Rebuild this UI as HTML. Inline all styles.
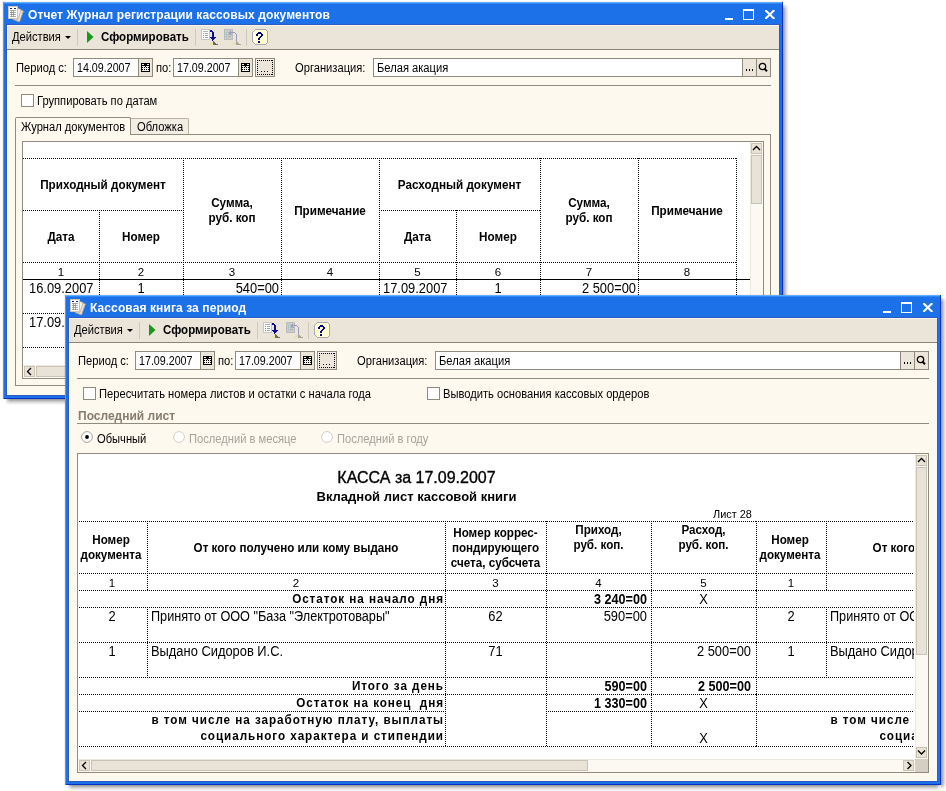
<!DOCTYPE html>
<html><head><meta charset="utf-8"><style>
html,body{margin:0;padding:0;background:#fff;width:946px;height:791px;overflow:hidden;position:relative;font-family:"Liberation Sans", sans-serif;}
div{font-family:"Liberation Sans", sans-serif;}
</style></head><body><div style="position:absolute;left:0;top:0;width:946px;height:791px;overflow:hidden;will-change:transform;">
<div style="position:absolute;left:783px;top:5px;width:6px;height:398px;background:linear-gradient(90deg,rgba(0,0,0,.42),rgba(0,0,0,.12) 60%,rgba(0,0,0,0));-webkit-mask:linear-gradient(180deg,rgba(0,0,0,.3),#000 4px,#000 calc(100% - 5px),rgba(0,0,0,0));"></div><div style="position:absolute;left:6px;top:399px;width:778px;height:6px;background:linear-gradient(180deg,rgba(0,0,0,.42),rgba(0,0,0,.12) 60%,rgba(0,0,0,0));-webkit-mask:linear-gradient(90deg,rgba(0,0,0,.3),#000 4px,#000 calc(100% - 6px),rgba(0,0,0,0));"></div><div style="position:absolute;left:2px;top:1px;width:1px;height:398px;background:rgba(120,90,60,.10);"></div><div style="position:absolute;left:3px;top:1px;width:780px;height:1px;background:rgba(120,90,60,.07);"></div><div style="position:absolute;left:3px;top:2px;width:780px;height:397px;background:#1C70E8;box-shadow:inset 1px 0 0 #4A9CFF, inset -1px -1px 0 #0034C8, inset 0 1px 0 #62AEFF;"></div><div style="position:absolute;left:4px;top:3px;width:778px;height:1px;background:#3088F8;"></div><div style="position:absolute;left:6px;top:24px;width:774px;height:372px;background:#2F5CC0;"></div><div style="position:absolute;left:7px;top:25px;width:772px;height:370px;background:#FEF9EE;"></div><svg style="position:absolute;left:8px;top:6px" width="17" height="17" viewBox="0 0 17 17">
<path d="M9 2.5 L15.5 5 L11.5 16 L5 13.5 Z" fill="#E6E2D8" stroke="#B09C80" stroke-width="0.8"/>
<path d="M8 2 L13 3.5 L10 13.5 L5 12.5 Z" fill="#F6F4EE" stroke="#B09C80" stroke-width="0.6"/>
<rect x="0.5" y="0.5" width="9" height="12" fill="#FFFFFF" stroke="#D0C4AC"/>
<rect x="2" y="2" width="2" height="1" fill="#20208A"/><rect x="6" y="2" width="2" height="1" fill="#20208A"/>
<path d="M2 4.5H8M2 6.5H8M2 8.5H8M2 10.5H8M3.5 4V11M5.5 4V11" stroke="#8A8A8A" stroke-width="0.7" fill="none"/>
</svg><div style="position:absolute;left:28px;top:7px;height:16px;line-height:16px;font-size:12px;font-weight:700;color:#fff;text-align:left;white-space:pre;letter-spacing:0.1px;">Отчет Журнал регистрации кассовых документов</div><div style="position:absolute;left:725px;top:18px;width:8px;height:2px;background:#fff;"></div><div style="position:absolute;left:743px;top:9px;width:11px;height:11px;box-sizing:border-box;border:1px solid #fff;border-top:2px solid #fff;"></div><svg style="position:absolute;left:765px;top:10px" width="10" height="9" viewBox="0 0 10 9">
<path d="M1 0.8L8.6 8.2M8.6 0.8L1 8.2" stroke="#fff" stroke-width="2.1" stroke-linecap="square"/></svg><div style="position:absolute;left:7px;top:25px;width:772px;height:24px;background:#EBE4D9;box-shadow:inset 1px 1px 0 #F8F4EC;"></div><div style="position:absolute;left:7px;top:49px;width:772px;height:1px;background:#8C8575;"></div><div style="position:absolute;left:12px;top:30px;height:15px;line-height:15px;font-size:12px;font-weight:400;color:#000;text-align:left;white-space:pre;transform:scaleX(0.93);transform-origin:0 0;">Действия</div><svg style="position:absolute;left:65px;top:36px" width="6" height="4"><path d="M0 0H6L3 3Z" fill="#000"/></svg><div style="position:absolute;left:77px;top:29px;width:1px;height:17px;background:#CFC9BC;"></div><svg style="position:absolute;left:87px;top:31px" width="7" height="13"><path d="M0 0L6.5 6L0 12Z" fill="#189818"/></svg><div style="position:absolute;left:101px;top:30px;height:15px;line-height:15px;font-size:12px;font-weight:700;color:#000;text-align:left;white-space:pre;transform:scaleX(0.96);transform-origin:0 0;">Сформировать</div><div style="position:absolute;left:195px;top:29px;width:1px;height:17px;background:#CFC9BC;"></div><svg style="position:absolute;left:201px;top:29px" width="17" height="16" shape-rendering="crispEdges"><rect x="1" y="1" width="7" height="9" fill="#FFFFFF"/><rect x="0" y="0" width="1" height="1" fill="#C6C6C6"/><rect x="1" y="0" width="1" height="1" fill="#C6C6C6"/><rect x="2" y="0" width="1" height="1" fill="#C6C6C6"/><rect x="3" y="0" width="1" height="1" fill="#C6C6C6"/><rect x="4" y="0" width="1" height="1" fill="#C6C6C6"/><rect x="5" y="0" width="1" height="1" fill="#C6C6C6"/><rect x="6" y="0" width="1" height="1" fill="#C6C6C6"/><rect x="7" y="0" width="1" height="1" fill="#C6C6C6"/><rect x="8" y="0" width="1" height="1" fill="#C6C6C6"/><rect x="0" y="1" width="1" height="1" fill="#C6C6C6"/><rect x="8" y="1" width="1" height="1" fill="#C6C6C6"/><rect x="9" y="1" width="1" height="1" fill="#0A0A96"/><rect x="10" y="1" width="1" height="1" fill="#0A0A96"/><rect x="0" y="2" width="1" height="1" fill="#C6C6C6"/><rect x="2" y="2" width="1" height="1" fill="#B4B4B4"/><rect x="3" y="2" width="1" height="1" fill="#B4B4B4"/><rect x="4" y="2" width="1" height="1" fill="#B4B4B4"/><rect x="5" y="2" width="1" height="1" fill="#B4B4B4"/><rect x="6" y="2" width="1" height="1" fill="#B4B4B4"/><rect x="8" y="2" width="1" height="1" fill="#C6C6C6"/><rect x="9" y="2" width="1" height="1" fill="#0A0A96"/><rect x="10" y="2" width="1" height="1" fill="#0A0A96"/><rect x="11" y="2" width="1" height="1" fill="#0A0A96"/><rect x="0" y="3" width="1" height="1" fill="#C6C6C6"/><rect x="8" y="3" width="1" height="1" fill="#C6C6C6"/><rect x="11" y="3" width="1" height="1" fill="#0A0A96"/><rect x="12" y="3" width="1" height="1" fill="#0A0A96"/><rect x="0" y="4" width="1" height="1" fill="#C6C6C6"/><rect x="2" y="4" width="1" height="1" fill="#30B8C8"/><rect x="4" y="4" width="1" height="1" fill="#A8A8A8"/><rect x="5" y="4" width="1" height="1" fill="#A8A8A8"/><rect x="6" y="4" width="1" height="1" fill="#A8A8A8"/><rect x="8" y="4" width="1" height="1" fill="#C6C6C6"/><rect x="11" y="4" width="1" height="1" fill="#0A0A96"/><rect x="12" y="4" width="1" height="1" fill="#0A0A96"/><rect x="0" y="5" width="1" height="1" fill="#C6C6C6"/><rect x="8" y="5" width="1" height="1" fill="#C6C6C6"/><rect x="11" y="5" width="1" height="1" fill="#0A0A96"/><rect x="12" y="5" width="1" height="1" fill="#0A0A96"/><rect x="0" y="6" width="1" height="1" fill="#C6C6C6"/><rect x="2" y="6" width="1" height="1" fill="#30B8C8"/><rect x="4" y="6" width="1" height="1" fill="#A8A8A8"/><rect x="5" y="6" width="1" height="1" fill="#A8A8A8"/><rect x="6" y="6" width="1" height="1" fill="#A8A8A8"/><rect x="8" y="6" width="1" height="1" fill="#C6C6C6"/><rect x="11" y="6" width="1" height="1" fill="#0A0A96"/><rect x="12" y="6" width="1" height="1" fill="#0A0A96"/><rect x="0" y="7" width="1" height="1" fill="#C6C6C6"/><rect x="8" y="7" width="1" height="1" fill="#C6C6C6"/><rect x="11" y="7" width="1" height="1" fill="#0A0A96"/><rect x="12" y="7" width="1" height="1" fill="#0A0A96"/><rect x="0" y="8" width="1" height="1" fill="#C6C6C6"/><rect x="2" y="8" width="1" height="1" fill="#30B8C8"/><rect x="4" y="8" width="1" height="1" fill="#A8A8A8"/><rect x="5" y="8" width="1" height="1" fill="#A8A8A8"/><rect x="6" y="8" width="1" height="1" fill="#A8A8A8"/><rect x="8" y="8" width="1" height="1" fill="#C6C6C6"/><rect x="9" y="8" width="1" height="1" fill="#0A0A96"/><rect x="10" y="8" width="1" height="1" fill="#0A0A96"/><rect x="11" y="8" width="1" height="1" fill="#0A0A96"/><rect x="12" y="8" width="1" height="1" fill="#0A0A96"/><rect x="13" y="8" width="1" height="1" fill="#0A0A96"/><rect x="14" y="8" width="1" height="1" fill="#0A0A96"/><rect x="0" y="9" width="1" height="1" fill="#C6C6C6"/><rect x="8" y="9" width="1" height="1" fill="#C6C6C6"/><rect x="10" y="9" width="1" height="1" fill="#0A0A96"/><rect x="11" y="9" width="1" height="1" fill="#0A0A96"/><rect x="12" y="9" width="1" height="1" fill="#0A0A96"/><rect x="13" y="9" width="1" height="1" fill="#0A0A96"/><rect x="0" y="10" width="1" height="1" fill="#C6C6C6"/><rect x="1" y="10" width="1" height="1" fill="#C6C6C6"/><rect x="2" y="10" width="1" height="1" fill="#C6C6C6"/><rect x="3" y="10" width="1" height="1" fill="#C6C6C6"/><rect x="4" y="10" width="1" height="1" fill="#C6C6C6"/><rect x="5" y="10" width="1" height="1" fill="#C6C6C6"/><rect x="6" y="10" width="1" height="1" fill="#C6C6C6"/><rect x="7" y="10" width="1" height="1" fill="#C6C6C6"/><rect x="8" y="10" width="1" height="1" fill="#C6C6C6"/><rect x="11" y="10" width="1" height="1" fill="#0A0A96"/><rect x="12" y="10" width="1" height="1" fill="#0A0A96"/><rect x="11" y="11" width="1" height="1" fill="#0A0A96"/><rect x="12" y="12" width="1" height="1" fill="#6E6C58"/><rect x="10" y="13" width="1" height="1" fill="#EEE6A8"/><rect x="11" y="13" width="1" height="1" fill="#EEE6A8"/><rect x="12" y="13" width="1" height="1" fill="#6E6C58"/><rect x="13" y="13" width="1" height="1" fill="#6E6C58"/><rect x="9" y="14" width="1" height="1" fill="#EEE6A8"/><rect x="10" y="14" width="1" height="1" fill="#EEE6A8"/><rect x="11" y="14" width="1" height="1" fill="#EEE6A8"/><rect x="12" y="14" width="1" height="1" fill="#6E6C58"/><rect x="13" y="14" width="1" height="1" fill="#6E6C58"/><rect x="14" y="14" width="1" height="1" fill="#6E6C58"/><rect x="8" y="15" width="1" height="1" fill="#EEE6A8"/><rect x="9" y="15" width="1" height="1" fill="#EEE6A8"/><rect x="10" y="15" width="1" height="1" fill="#EEE6A8"/><rect x="11" y="15" width="1" height="1" fill="#EEE6A8"/><rect x="12" y="15" width="1" height="1" fill="#6E6C58"/><rect x="13" y="15" width="1" height="1" fill="#6E6C58"/><rect x="14" y="15" width="1" height="1" fill="#6E6C58"/><rect x="15" y="15" width="1" height="1" fill="#6E6C58"/><rect x="16" y="15" width="1" height="1" fill="#6E6C58"/></svg><svg style="position:absolute;left:224px;top:29px" width="17" height="16" shape-rendering="crispEdges"><rect x="0" y="0" width="1" height="1" fill="#BCBCBC"/><rect x="1" y="0" width="1" height="1" fill="#BCBCBC"/><rect x="2" y="0" width="1" height="1" fill="#BCBCBC"/><rect x="3" y="0" width="1" height="1" fill="#BCBCBC"/><rect x="4" y="0" width="1" height="1" fill="#BCBCBC"/><rect x="5" y="0" width="1" height="1" fill="#BCBCBC"/><rect x="6" y="0" width="1" height="1" fill="#BCBCBC"/><rect x="7" y="0" width="1" height="1" fill="#BCBCBC"/><rect x="8" y="0" width="1" height="1" fill="#BCBCBC"/><rect x="0" y="1" width="1" height="1" fill="#BCBCBC"/><rect x="1" y="1" width="1" height="1" fill="#CACACA"/><rect x="2" y="1" width="1" height="1" fill="#CACACA"/><rect x="3" y="1" width="1" height="1" fill="#CACACA"/><rect x="4" y="1" width="1" height="1" fill="#CACACA"/><rect x="5" y="1" width="1" height="1" fill="#CACACA"/><rect x="6" y="1" width="1" height="1" fill="#CACACA"/><rect x="7" y="1" width="1" height="1" fill="#CACACA"/><rect x="8" y="1" width="1" height="1" fill="#BCBCBC"/><rect x="0" y="2" width="1" height="1" fill="#BCBCBC"/><rect x="1" y="2" width="1" height="1" fill="#CACACA"/><rect x="2" y="2" width="1" height="1" fill="#CACACA"/><rect x="3" y="2" width="1" height="1" fill="#CACACA"/><rect x="4" y="2" width="1" height="1" fill="#CACACA"/><rect x="5" y="2" width="1" height="1" fill="#CACACA"/><rect x="6" y="2" width="1" height="1" fill="#9A9AC0"/><rect x="7" y="2" width="1" height="1" fill="#CACACA"/><rect x="8" y="2" width="1" height="1" fill="#BCBCBC"/><rect x="0" y="3" width="1" height="1" fill="#BCBCBC"/><rect x="1" y="3" width="1" height="1" fill="#CACACA"/><rect x="2" y="3" width="1" height="1" fill="#88C8D0"/><rect x="3" y="3" width="1" height="1" fill="#CACACA"/><rect x="4" y="3" width="1" height="1" fill="#B4B4B8"/><rect x="5" y="3" width="1" height="1" fill="#9A9AC0"/><rect x="6" y="3" width="1" height="1" fill="#9A9AC0"/><rect x="7" y="3" width="1" height="1" fill="#9A9AC0"/><rect x="8" y="3" width="1" height="1" fill="#9A9AC0"/><rect x="9" y="3" width="1" height="1" fill="#9A9AC0"/><rect x="10" y="3" width="1" height="1" fill="#9A9AC0"/><rect x="0" y="4" width="1" height="1" fill="#BCBCBC"/><rect x="1" y="4" width="1" height="1" fill="#CACACA"/><rect x="2" y="4" width="1" height="1" fill="#CACACA"/><rect x="3" y="4" width="1" height="1" fill="#CACACA"/><rect x="4" y="4" width="1" height="1" fill="#CACACA"/><rect x="5" y="4" width="1" height="1" fill="#9A9AC0"/><rect x="6" y="4" width="1" height="1" fill="#9A9AC0"/><rect x="7" y="4" width="1" height="1" fill="#CACACA"/><rect x="8" y="4" width="1" height="1" fill="#BCBCBC"/><rect x="11" y="4" width="1" height="1" fill="#9A9AC0"/><rect x="0" y="5" width="1" height="1" fill="#BCBCBC"/><rect x="1" y="5" width="1" height="1" fill="#CACACA"/><rect x="2" y="5" width="1" height="1" fill="#88C8D0"/><rect x="3" y="5" width="1" height="1" fill="#CACACA"/><rect x="4" y="5" width="1" height="1" fill="#B4B4B8"/><rect x="5" y="5" width="1" height="1" fill="#B4B4B8"/><rect x="6" y="5" width="1" height="1" fill="#B4B4B8"/><rect x="7" y="5" width="1" height="1" fill="#9A9AC0"/><rect x="8" y="5" width="1" height="1" fill="#BCBCBC"/><rect x="12" y="5" width="1" height="1" fill="#9A9AC0"/><rect x="0" y="6" width="1" height="1" fill="#BCBCBC"/><rect x="1" y="6" width="1" height="1" fill="#CACACA"/><rect x="2" y="6" width="1" height="1" fill="#CACACA"/><rect x="3" y="6" width="1" height="1" fill="#CACACA"/><rect x="4" y="6" width="1" height="1" fill="#CACACA"/><rect x="5" y="6" width="1" height="1" fill="#CACACA"/><rect x="6" y="6" width="1" height="1" fill="#CACACA"/><rect x="7" y="6" width="1" height="1" fill="#CACACA"/><rect x="8" y="6" width="1" height="1" fill="#BCBCBC"/><rect x="12" y="6" width="1" height="1" fill="#9A9AC0"/><rect x="0" y="7" width="1" height="1" fill="#BCBCBC"/><rect x="1" y="7" width="1" height="1" fill="#CACACA"/><rect x="2" y="7" width="1" height="1" fill="#88C8D0"/><rect x="3" y="7" width="1" height="1" fill="#CACACA"/><rect x="4" y="7" width="1" height="1" fill="#B4B4B8"/><rect x="5" y="7" width="1" height="1" fill="#B4B4B8"/><rect x="6" y="7" width="1" height="1" fill="#B4B4B8"/><rect x="7" y="7" width="1" height="1" fill="#CACACA"/><rect x="8" y="7" width="1" height="1" fill="#BCBCBC"/><rect x="12" y="7" width="1" height="1" fill="#9A9AC0"/><rect x="0" y="8" width="1" height="1" fill="#BCBCBC"/><rect x="1" y="8" width="1" height="1" fill="#CACACA"/><rect x="2" y="8" width="1" height="1" fill="#CACACA"/><rect x="3" y="8" width="1" height="1" fill="#CACACA"/><rect x="4" y="8" width="1" height="1" fill="#CACACA"/><rect x="5" y="8" width="1" height="1" fill="#CACACA"/><rect x="6" y="8" width="1" height="1" fill="#CACACA"/><rect x="7" y="8" width="1" height="1" fill="#CACACA"/><rect x="8" y="8" width="1" height="1" fill="#BCBCBC"/><rect x="12" y="8" width="1" height="1" fill="#9A9AC0"/><rect x="0" y="9" width="1" height="1" fill="#BCBCBC"/><rect x="1" y="9" width="1" height="1" fill="#CACACA"/><rect x="2" y="9" width="1" height="1" fill="#CACACA"/><rect x="3" y="9" width="1" height="1" fill="#CACACA"/><rect x="4" y="9" width="1" height="1" fill="#CACACA"/><rect x="5" y="9" width="1" height="1" fill="#CACACA"/><rect x="6" y="9" width="1" height="1" fill="#CACACA"/><rect x="7" y="9" width="1" height="1" fill="#CACACA"/><rect x="8" y="9" width="1" height="1" fill="#BCBCBC"/><rect x="12" y="9" width="1" height="1" fill="#9A9AC0"/><rect x="0" y="10" width="1" height="1" fill="#BCBCBC"/><rect x="1" y="10" width="1" height="1" fill="#BCBCBC"/><rect x="2" y="10" width="1" height="1" fill="#BCBCBC"/><rect x="3" y="10" width="1" height="1" fill="#BCBCBC"/><rect x="4" y="10" width="1" height="1" fill="#BCBCBC"/><rect x="5" y="10" width="1" height="1" fill="#BCBCBC"/><rect x="6" y="10" width="1" height="1" fill="#BCBCBC"/><rect x="7" y="10" width="1" height="1" fill="#BCBCBC"/><rect x="8" y="10" width="1" height="1" fill="#BCBCBC"/><rect x="12" y="10" width="1" height="1" fill="#9A9AC0"/><rect x="12" y="11" width="1" height="1" fill="#9A9AC0"/><rect x="12" y="12" width="1" height="1" fill="#A8A898"/><rect x="10" y="13" width="1" height="1" fill="#E6E2B8"/><rect x="11" y="13" width="1" height="1" fill="#E6E2B8"/><rect x="12" y="13" width="1" height="1" fill="#A8A898"/><rect x="13" y="13" width="1" height="1" fill="#A8A898"/><rect x="9" y="14" width="1" height="1" fill="#E6E2B8"/><rect x="10" y="14" width="1" height="1" fill="#E6E2B8"/><rect x="11" y="14" width="1" height="1" fill="#E6E2B8"/><rect x="12" y="14" width="1" height="1" fill="#A8A898"/><rect x="13" y="14" width="1" height="1" fill="#A8A898"/><rect x="14" y="14" width="1" height="1" fill="#A8A898"/><rect x="8" y="15" width="1" height="1" fill="#E6E2B8"/><rect x="9" y="15" width="1" height="1" fill="#E6E2B8"/><rect x="10" y="15" width="1" height="1" fill="#E6E2B8"/><rect x="11" y="15" width="1" height="1" fill="#E6E2B8"/><rect x="12" y="15" width="1" height="1" fill="#A8A898"/><rect x="13" y="15" width="1" height="1" fill="#A8A898"/><rect x="14" y="15" width="1" height="1" fill="#A8A898"/><rect x="15" y="15" width="1" height="1" fill="#A8A898"/><rect x="16" y="15" width="1" height="1" fill="#A8A898"/></svg><div style="position:absolute;left:246px;top:29px;width:1px;height:17px;background:#CFC9BC;"></div><svg style="position:absolute;left:252px;top:29px" width="16" height="16" viewBox="0 0 16 16" shape-rendering="crispEdges">
<path d="M3 0H13L16 3V13L13 16H3L0 13V3Z" fill="#A8A8B0"/>
<path d="M3 1H13L15 3V13L13 15H3L1 13V3Z" fill="#FFFFD2"/><rect x="6" y="3" width="1" height="1" fill="#00008C"/><rect x="7" y="3" width="1" height="1" fill="#00008C"/><rect x="8" y="3" width="1" height="1" fill="#00008C"/><rect x="5" y="4" width="1" height="1" fill="#00008C"/><rect x="6" y="4" width="1" height="1" fill="#00008C"/><rect x="7" y="4" width="1" height="1" fill="#00008C"/><rect x="8" y="4" width="1" height="1" fill="#00008C"/><rect x="9" y="4" width="1" height="1" fill="#00008C"/><rect x="4" y="5" width="1" height="1" fill="#00008C"/><rect x="5" y="5" width="1" height="1" fill="#00008C"/><rect x="9" y="5" width="1" height="1" fill="#00008C"/><rect x="10" y="5" width="1" height="1" fill="#00008C"/><rect x="4" y="6" width="1" height="1" fill="#00008C"/><rect x="5" y="6" width="1" height="1" fill="#00008C"/><rect x="9" y="6" width="1" height="1" fill="#00008C"/><rect x="10" y="6" width="1" height="1" fill="#00008C"/><rect x="8" y="7" width="1" height="1" fill="#00008C"/><rect x="9" y="7" width="1" height="1" fill="#00008C"/><rect x="7" y="8" width="1" height="1" fill="#00008C"/><rect x="8" y="8" width="1" height="1" fill="#00008C"/><rect x="6" y="9" width="1" height="1" fill="#00008C"/><rect x="7" y="9" width="1" height="1" fill="#00008C"/><rect x="6" y="10" width="1" height="1" fill="#00008C"/><rect x="7" y="10" width="1" height="1" fill="#00008C"/><rect x="6" y="12" width="1" height="1" fill="#00008C"/><rect x="7" y="12" width="1" height="1" fill="#00008C"/><rect x="6" y="13" width="1" height="1" fill="#00008C"/><rect x="7" y="13" width="1" height="1" fill="#00008C"/></svg><div style="position:absolute;left:16px;top:61px;height:15px;line-height:15px;font-size:12px;font-weight:400;color:#000;text-align:left;white-space:pre;transform:scaleX(0.93);transform-origin:0 0;">Период с:</div><div style="position:absolute;left:73px;top:58px;width:80px;height:19px;box-sizing:border-box;background:#fff;border:1px solid #8F8B7D;"></div><div style="position:absolute;left:77px;top:61px;height:15px;line-height:15px;font-size:12px;font-weight:400;color:#000;text-align:left;white-space:pre;transform:scaleX(0.89);transform-origin:0 0;">14.09.2007</div><div style="position:absolute;left:138px;top:59px;width:14px;height:17px;background:#ECE6DA;border-left:1px solid #8F8B7D;box-sizing:border-box;"></div><svg style="position:absolute;left:141px;top:63px" width="9" height="9" shape-rendering="crispEdges"><rect x="0" y="0" width="1" height="1" fill="#000"/><rect x="1" y="0" width="1" height="1" fill="#000"/><rect x="2" y="0" width="1" height="1" fill="#000"/><rect x="3" y="0" width="1" height="1" fill="#000"/><rect x="4" y="0" width="1" height="1" fill="#000"/><rect x="5" y="0" width="1" height="1" fill="#000"/><rect x="6" y="0" width="1" height="1" fill="#000"/><rect x="7" y="0" width="1" height="1" fill="#000"/><rect x="8" y="0" width="1" height="1" fill="#000"/><rect x="0" y="1" width="1" height="1" fill="#000"/><rect x="1" y="1" width="1" height="1" fill="#F2EEE4"/><rect x="2" y="1" width="1" height="1" fill="#F2EEE4"/><rect x="3" y="1" width="1" height="1" fill="#000"/><rect x="4" y="1" width="1" height="1" fill="#000"/><rect x="5" y="1" width="1" height="1" fill="#000"/><rect x="6" y="1" width="1" height="1" fill="#F2EEE4"/><rect x="7" y="1" width="1" height="1" fill="#F2EEE4"/><rect x="8" y="1" width="1" height="1" fill="#000"/><rect x="0" y="2" width="1" height="1" fill="#000"/><rect x="1" y="2" width="1" height="1" fill="#000"/><rect x="2" y="2" width="1" height="1" fill="#000"/><rect x="3" y="2" width="1" height="1" fill="#000"/><rect x="4" y="2" width="1" height="1" fill="#000"/><rect x="5" y="2" width="1" height="1" fill="#000"/><rect x="6" y="2" width="1" height="1" fill="#000"/><rect x="7" y="2" width="1" height="1" fill="#000"/><rect x="8" y="2" width="1" height="1" fill="#000"/><rect x="0" y="3" width="1" height="1" fill="#000"/><rect x="1" y="3" width="1" height="1" fill="#F2EEE4"/><rect x="2" y="3" width="1" height="1" fill="#F2EEE4"/><rect x="3" y="3" width="1" height="1" fill="#F2EEE4"/><rect x="4" y="3" width="1" height="1" fill="#000"/><rect x="5" y="3" width="1" height="1" fill="#F2EEE4"/><rect x="6" y="3" width="1" height="1" fill="#F2EEE4"/><rect x="7" y="3" width="1" height="1" fill="#F2EEE4"/><rect x="8" y="3" width="1" height="1" fill="#000"/><rect x="0" y="4" width="1" height="1" fill="#000"/><rect x="1" y="4" width="1" height="1" fill="#000"/><rect x="2" y="4" width="1" height="1" fill="#F2EEE4"/><rect x="3" y="4" width="1" height="1" fill="#000"/><rect x="4" y="4" width="1" height="1" fill="#F2EEE4"/><rect x="5" y="4" width="1" height="1" fill="#000"/><rect x="6" y="4" width="1" height="1" fill="#F2EEE4"/><rect x="7" y="4" width="1" height="1" fill="#000"/><rect x="8" y="4" width="1" height="1" fill="#000"/><rect x="0" y="5" width="1" height="1" fill="#000"/><rect x="1" y="5" width="1" height="1" fill="#F2EEE4"/><rect x="2" y="5" width="1" height="1" fill="#F2EEE4"/><rect x="3" y="5" width="1" height="1" fill="#F2EEE4"/><rect x="4" y="5" width="1" height="1" fill="#F2EEE4"/><rect x="5" y="5" width="1" height="1" fill="#F2EEE4"/><rect x="6" y="5" width="1" height="1" fill="#F2EEE4"/><rect x="7" y="5" width="1" height="1" fill="#F2EEE4"/><rect x="8" y="5" width="1" height="1" fill="#000"/><rect x="0" y="6" width="1" height="1" fill="#000"/><rect x="1" y="6" width="1" height="1" fill="#000"/><rect x="2" y="6" width="1" height="1" fill="#F2EEE4"/><rect x="3" y="6" width="1" height="1" fill="#000"/><rect x="4" y="6" width="1" height="1" fill="#F2EEE4"/><rect x="5" y="6" width="1" height="1" fill="#000"/><rect x="6" y="6" width="1" height="1" fill="#F2EEE4"/><rect x="7" y="6" width="1" height="1" fill="#000"/><rect x="8" y="6" width="1" height="1" fill="#000"/><rect x="0" y="7" width="1" height="1" fill="#000"/><rect x="1" y="7" width="1" height="1" fill="#F2EEE4"/><rect x="2" y="7" width="1" height="1" fill="#F2EEE4"/><rect x="3" y="7" width="1" height="1" fill="#F2EEE4"/><rect x="4" y="7" width="1" height="1" fill="#F2EEE4"/><rect x="5" y="7" width="1" height="1" fill="#F2EEE4"/><rect x="6" y="7" width="1" height="1" fill="#F2EEE4"/><rect x="7" y="7" width="1" height="1" fill="#F2EEE4"/><rect x="8" y="7" width="1" height="1" fill="#000"/><rect x="0" y="8" width="1" height="1" fill="#000"/><rect x="1" y="8" width="1" height="1" fill="#000"/><rect x="2" y="8" width="1" height="1" fill="#000"/><rect x="3" y="8" width="1" height="1" fill="#000"/><rect x="4" y="8" width="1" height="1" fill="#000"/><rect x="5" y="8" width="1" height="1" fill="#000"/><rect x="6" y="8" width="1" height="1" fill="#000"/><rect x="7" y="8" width="1" height="1" fill="#000"/><rect x="8" y="8" width="1" height="1" fill="#000"/></svg><div style="position:absolute;left:156px;top:61px;height:15px;line-height:15px;font-size:12px;font-weight:400;color:#000;text-align:left;white-space:pre;transform:scaleX(0.93);transform-origin:0 0;">по:</div><div style="position:absolute;left:173px;top:58px;width:80px;height:19px;box-sizing:border-box;background:#fff;border:1px solid #8F8B7D;"></div><div style="position:absolute;left:177px;top:61px;height:15px;line-height:15px;font-size:12px;font-weight:400;color:#000;text-align:left;white-space:pre;transform:scaleX(0.89);transform-origin:0 0;">17.09.2007</div><div style="position:absolute;left:238px;top:59px;width:14px;height:17px;background:#ECE6DA;border-left:1px solid #8F8B7D;box-sizing:border-box;"></div><svg style="position:absolute;left:241px;top:63px" width="9" height="9" shape-rendering="crispEdges"><rect x="0" y="0" width="1" height="1" fill="#000"/><rect x="1" y="0" width="1" height="1" fill="#000"/><rect x="2" y="0" width="1" height="1" fill="#000"/><rect x="3" y="0" width="1" height="1" fill="#000"/><rect x="4" y="0" width="1" height="1" fill="#000"/><rect x="5" y="0" width="1" height="1" fill="#000"/><rect x="6" y="0" width="1" height="1" fill="#000"/><rect x="7" y="0" width="1" height="1" fill="#000"/><rect x="8" y="0" width="1" height="1" fill="#000"/><rect x="0" y="1" width="1" height="1" fill="#000"/><rect x="1" y="1" width="1" height="1" fill="#F2EEE4"/><rect x="2" y="1" width="1" height="1" fill="#F2EEE4"/><rect x="3" y="1" width="1" height="1" fill="#000"/><rect x="4" y="1" width="1" height="1" fill="#000"/><rect x="5" y="1" width="1" height="1" fill="#000"/><rect x="6" y="1" width="1" height="1" fill="#F2EEE4"/><rect x="7" y="1" width="1" height="1" fill="#F2EEE4"/><rect x="8" y="1" width="1" height="1" fill="#000"/><rect x="0" y="2" width="1" height="1" fill="#000"/><rect x="1" y="2" width="1" height="1" fill="#000"/><rect x="2" y="2" width="1" height="1" fill="#000"/><rect x="3" y="2" width="1" height="1" fill="#000"/><rect x="4" y="2" width="1" height="1" fill="#000"/><rect x="5" y="2" width="1" height="1" fill="#000"/><rect x="6" y="2" width="1" height="1" fill="#000"/><rect x="7" y="2" width="1" height="1" fill="#000"/><rect x="8" y="2" width="1" height="1" fill="#000"/><rect x="0" y="3" width="1" height="1" fill="#000"/><rect x="1" y="3" width="1" height="1" fill="#F2EEE4"/><rect x="2" y="3" width="1" height="1" fill="#F2EEE4"/><rect x="3" y="3" width="1" height="1" fill="#F2EEE4"/><rect x="4" y="3" width="1" height="1" fill="#000"/><rect x="5" y="3" width="1" height="1" fill="#F2EEE4"/><rect x="6" y="3" width="1" height="1" fill="#F2EEE4"/><rect x="7" y="3" width="1" height="1" fill="#F2EEE4"/><rect x="8" y="3" width="1" height="1" fill="#000"/><rect x="0" y="4" width="1" height="1" fill="#000"/><rect x="1" y="4" width="1" height="1" fill="#000"/><rect x="2" y="4" width="1" height="1" fill="#F2EEE4"/><rect x="3" y="4" width="1" height="1" fill="#000"/><rect x="4" y="4" width="1" height="1" fill="#F2EEE4"/><rect x="5" y="4" width="1" height="1" fill="#000"/><rect x="6" y="4" width="1" height="1" fill="#F2EEE4"/><rect x="7" y="4" width="1" height="1" fill="#000"/><rect x="8" y="4" width="1" height="1" fill="#000"/><rect x="0" y="5" width="1" height="1" fill="#000"/><rect x="1" y="5" width="1" height="1" fill="#F2EEE4"/><rect x="2" y="5" width="1" height="1" fill="#F2EEE4"/><rect x="3" y="5" width="1" height="1" fill="#F2EEE4"/><rect x="4" y="5" width="1" height="1" fill="#F2EEE4"/><rect x="5" y="5" width="1" height="1" fill="#F2EEE4"/><rect x="6" y="5" width="1" height="1" fill="#F2EEE4"/><rect x="7" y="5" width="1" height="1" fill="#F2EEE4"/><rect x="8" y="5" width="1" height="1" fill="#000"/><rect x="0" y="6" width="1" height="1" fill="#000"/><rect x="1" y="6" width="1" height="1" fill="#000"/><rect x="2" y="6" width="1" height="1" fill="#F2EEE4"/><rect x="3" y="6" width="1" height="1" fill="#000"/><rect x="4" y="6" width="1" height="1" fill="#F2EEE4"/><rect x="5" y="6" width="1" height="1" fill="#000"/><rect x="6" y="6" width="1" height="1" fill="#F2EEE4"/><rect x="7" y="6" width="1" height="1" fill="#000"/><rect x="8" y="6" width="1" height="1" fill="#000"/><rect x="0" y="7" width="1" height="1" fill="#000"/><rect x="1" y="7" width="1" height="1" fill="#F2EEE4"/><rect x="2" y="7" width="1" height="1" fill="#F2EEE4"/><rect x="3" y="7" width="1" height="1" fill="#F2EEE4"/><rect x="4" y="7" width="1" height="1" fill="#F2EEE4"/><rect x="5" y="7" width="1" height="1" fill="#F2EEE4"/><rect x="6" y="7" width="1" height="1" fill="#F2EEE4"/><rect x="7" y="7" width="1" height="1" fill="#F2EEE4"/><rect x="8" y="7" width="1" height="1" fill="#000"/><rect x="0" y="8" width="1" height="1" fill="#000"/><rect x="1" y="8" width="1" height="1" fill="#000"/><rect x="2" y="8" width="1" height="1" fill="#000"/><rect x="3" y="8" width="1" height="1" fill="#000"/><rect x="4" y="8" width="1" height="1" fill="#000"/><rect x="5" y="8" width="1" height="1" fill="#000"/><rect x="6" y="8" width="1" height="1" fill="#000"/><rect x="7" y="8" width="1" height="1" fill="#000"/><rect x="8" y="8" width="1" height="1" fill="#000"/></svg><div style="position:absolute;left:255px;top:58px;width:20px;height:19px;box-sizing:border-box;background:#ECE6DA;border:1px solid #8F8B7D;box-shadow:inset 1px 1px 0 #F8F6F0;"></div><div style="position:absolute;left:257px;top:60px;width:16px;height:15px;box-sizing:border-box;background-image:repeating-linear-gradient(90deg,#000 0 1px,transparent 1px 2px),repeating-linear-gradient(90deg,#000 0 1px,transparent 1px 2px),repeating-linear-gradient(180deg,#000 0 1px,transparent 1px 2px),repeating-linear-gradient(180deg,#000 0 1px,transparent 1px 2px);background-size:100% 1px,100% 1px,1px 100%,1px 100%;background-position:0 0,0 100%,0 0,100% 0;background-repeat:no-repeat;"></div><div style="position:absolute;left:261px;top:71px;width:1px;height:1px;background:#000;"></div><div style="position:absolute;left:264px;top:71px;width:1px;height:1px;background:#000;"></div><div style="position:absolute;left:267px;top:71px;width:1px;height:1px;background:#000;"></div><div style="position:absolute;left:295px;top:61px;height:15px;line-height:15px;font-size:12px;font-weight:400;color:#000;text-align:left;white-space:pre;transform:scaleX(0.93);transform-origin:0 0;">Организация:</div><div style="position:absolute;left:373px;top:58px;width:398px;height:19px;box-sizing:border-box;background:#fff;border:1px solid #8F8B7D;"></div><div style="position:absolute;left:377px;top:61px;height:15px;line-height:15px;font-size:12px;font-weight:400;color:#000;text-align:left;white-space:pre;transform:scaleX(0.93);transform-origin:0 0;">Белая акация</div><div style="position:absolute;left:742px;top:59px;width:14px;height:17px;box-sizing:border-box;background:#ECE6DA;border-left:1px solid #8F8B7D;"></div><div style="position:absolute;left:746px;top:69px;width:1px;height:2px;background:#000;"></div><div style="position:absolute;left:749px;top:69px;width:1px;height:2px;background:#000;"></div><div style="position:absolute;left:752px;top:69px;width:1px;height:2px;background:#000;"></div><div style="position:absolute;left:756px;top:59px;width:14px;height:17px;box-sizing:border-box;background:#ECE6DA;border-left:1px solid #8F8B7D;"></div><svg style="position:absolute;left:758px;top:62px" width="11" height="11" viewBox="0 0 11 11">
<circle cx="4.5" cy="4.5" r="3.2" fill="none" stroke="#000" stroke-width="1.3"/>
<path d="M6.5 6.8L9 9.3" stroke="#000" stroke-width="2"/></svg><div style="position:absolute;left:15px;top:85px;width:756px;height:1px;background:#8F8B7D;"></div><div style="position:absolute;left:21px;top:94px;width:13px;height:13px;box-sizing:border-box;background:#fff;border:1px solid #8F8B7D;"></div><div style="position:absolute;left:37px;top:94px;height:15px;line-height:15px;font-size:12px;font-weight:400;color:#000;text-align:left;white-space:pre;transform:scaleX(0.93);transform-origin:0 0;">Группировать по датам</div><div style="position:absolute;left:15px;top:134px;width:756px;height:252px;box-sizing:border-box;border:1px solid #8F8B7D;"></div><div style="position:absolute;left:130px;top:118px;width:59px;height:16px;box-sizing:border-box;background:#F3EEE3;border:1px solid #B8B3A4;border-left:none;border-bottom:none;border-radius:0 2px 0 0;"></div><div style="position:absolute;left:137px;top:120px;height:15px;line-height:15px;font-size:12px;font-weight:400;color:#000;text-align:left;white-space:pre;transform:scaleX(0.93);transform-origin:0 0;">Обложка</div><div style="position:absolute;left:15px;top:117px;width:116px;height:18px;box-sizing:border-box;background:#FEF9EE;border:1px solid #8F8B7D;border-bottom:none;border-radius:2px 2px 0 0;"></div><div style="position:absolute;left:21px;top:120px;height:15px;line-height:15px;font-size:12px;font-weight:400;color:#000;text-align:left;white-space:pre;transform:scaleX(0.93);transform-origin:0 0;">Журнал документов</div><div style="position:absolute;left:22px;top:141px;width:742px;height:238px;box-sizing:border-box;border:1px solid #8F8B7D;background:#fff;"></div><div style="position:absolute;left:23px;top:142px;width:727px;height:223px;overflow:hidden;"><div style="position:absolute;left:0px;top:16px;width:714px;height:1px;background:repeating-linear-gradient(90deg,#000 0 1px,transparent 1px 2px);"></div><div style="position:absolute;left:0px;top:68px;width:160px;height:1px;background:repeating-linear-gradient(90deg,#000 0 1px,transparent 1px 2px);"></div><div style="position:absolute;left:356px;top:68px;width:161px;height:1px;background:repeating-linear-gradient(90deg,#000 0 1px,transparent 1px 2px);"></div><div style="position:absolute;left:0px;top:120px;width:714px;height:1px;background:repeating-linear-gradient(90deg,#000 0 1px,transparent 1px 2px);"></div><div style="position:absolute;left:0px;top:137px;width:727px;height:1px;background:#000;"></div><div style="position:absolute;left:0px;top:171px;width:714px;height:1px;background:repeating-linear-gradient(90deg,#000 0 1px,transparent 1px 2px);"></div><div style="position:absolute;left:0px;top:205px;width:714px;height:1px;background:repeating-linear-gradient(90deg,#000 0 1px,transparent 1px 2px);"></div><div style="position:absolute;left:160px;top:16px;width:1px;height:210px;background:repeating-linear-gradient(180deg,#000 0 1px,transparent 1px 2px);"></div><div style="position:absolute;left:258px;top:16px;width:1px;height:210px;background:repeating-linear-gradient(180deg,#000 0 1px,transparent 1px 2px);"></div><div style="position:absolute;left:356px;top:16px;width:1px;height:210px;background:repeating-linear-gradient(180deg,#000 0 1px,transparent 1px 2px);"></div><div style="position:absolute;left:517px;top:16px;width:1px;height:210px;background:repeating-linear-gradient(180deg,#000 0 1px,transparent 1px 2px);"></div><div style="position:absolute;left:615px;top:16px;width:1px;height:210px;background:repeating-linear-gradient(180deg,#000 0 1px,transparent 1px 2px);"></div><div style="position:absolute;left:713px;top:16px;width:1px;height:210px;background:repeating-linear-gradient(180deg,#000 0 1px,transparent 1px 2px);"></div><div style="position:absolute;left:76px;top:68px;width:1px;height:160px;background:repeating-linear-gradient(180deg,#000 0 1px,transparent 1px 2px);"></div><div style="position:absolute;left:433px;top:68px;width:1px;height:160px;background:repeating-linear-gradient(180deg,#000 0 1px,transparent 1px 2px);"></div><div style="position:absolute;left:0px;top:36px;width:160px;height:15px;line-height:15px;font-size:12px;font-weight:700;color:#000;text-align:center;white-space:pre;transform:scaleX(0.975);transform-origin:50% 0;">Приходный документ</div><div style="position:absolute;left:356px;top:36px;width:161px;height:15px;line-height:15px;font-size:12px;font-weight:700;color:#000;text-align:center;white-space:pre;transform:scaleX(0.975);transform-origin:50% 0;">Расходный документ</div><div style="position:absolute;left:0px;top:88px;width:76px;height:15px;line-height:15px;font-size:12px;font-weight:700;color:#000;text-align:center;white-space:pre;transform:scaleX(0.975);transform-origin:50% 0;">Дата</div><div style="position:absolute;left:76px;top:88px;width:84px;height:15px;line-height:15px;font-size:12px;font-weight:700;color:#000;text-align:center;white-space:pre;transform:scaleX(0.975);transform-origin:50% 0;">Номер</div><div style="position:absolute;left:356px;top:88px;width:77px;height:15px;line-height:15px;font-size:12px;font-weight:700;color:#000;text-align:center;white-space:pre;transform:scaleX(0.975);transform-origin:50% 0;">Дата</div><div style="position:absolute;left:433px;top:88px;width:84px;height:15px;line-height:15px;font-size:12px;font-weight:700;color:#000;text-align:center;white-space:pre;transform:scaleX(0.975);transform-origin:50% 0;">Номер</div><div style="position:absolute;left:160px;top:54px;width:98px;height:15px;line-height:15px;font-size:12px;font-weight:700;color:#000;text-align:center;white-space:pre;transform:scaleX(0.975);transform-origin:50% 0;">Сумма,</div><div style="position:absolute;left:160px;top:69px;width:98px;height:15px;line-height:15px;font-size:12px;font-weight:700;color:#000;text-align:center;white-space:pre;transform:scaleX(0.975);transform-origin:50% 0;">руб. коп</div><div style="position:absolute;left:517px;top:54px;width:98px;height:15px;line-height:15px;font-size:12px;font-weight:700;color:#000;text-align:center;white-space:pre;transform:scaleX(0.975);transform-origin:50% 0;">Сумма,</div><div style="position:absolute;left:517px;top:69px;width:98px;height:15px;line-height:15px;font-size:12px;font-weight:700;color:#000;text-align:center;white-space:pre;transform:scaleX(0.975);transform-origin:50% 0;">руб. коп</div><div style="position:absolute;left:258px;top:62px;width:98px;height:15px;line-height:15px;font-size:12px;font-weight:700;color:#000;text-align:center;white-space:pre;transform:scaleX(0.975);transform-origin:50% 0;">Примечание</div><div style="position:absolute;left:615px;top:62px;width:98px;height:15px;line-height:15px;font-size:12px;font-weight:700;color:#000;text-align:center;white-space:pre;transform:scaleX(0.975);transform-origin:50% 0;">Примечание</div><div style="position:absolute;left:0px;top:123px;width:76px;height:14.5px;line-height:14.5px;font-size:11.5px;font-weight:400;color:#000;text-align:center;white-space:pre;">1</div><div style="position:absolute;left:76px;top:123px;width:84px;height:14.5px;line-height:14.5px;font-size:11.5px;font-weight:400;color:#000;text-align:center;white-space:pre;">2</div><div style="position:absolute;left:160px;top:123px;width:98px;height:14.5px;line-height:14.5px;font-size:11.5px;font-weight:400;color:#000;text-align:center;white-space:pre;">3</div><div style="position:absolute;left:258px;top:123px;width:98px;height:14.5px;line-height:14.5px;font-size:11.5px;font-weight:400;color:#000;text-align:center;white-space:pre;">4</div><div style="position:absolute;left:356px;top:123px;width:77px;height:14.5px;line-height:14.5px;font-size:11.5px;font-weight:400;color:#000;text-align:center;white-space:pre;">5</div><div style="position:absolute;left:433px;top:123px;width:84px;height:14.5px;line-height:14.5px;font-size:11.5px;font-weight:400;color:#000;text-align:center;white-space:pre;">6</div><div style="position:absolute;left:517px;top:123px;width:98px;height:14.5px;line-height:14.5px;font-size:11.5px;font-weight:400;color:#000;text-align:center;white-space:pre;">7</div><div style="position:absolute;left:615px;top:123px;width:98px;height:14.5px;line-height:14.5px;font-size:11.5px;font-weight:400;color:#000;text-align:center;white-space:pre;">8</div><div style="position:absolute;left:6px;top:138px;height:16px;line-height:16px;font-size:14px;font-weight:400;color:#000;text-align:left;white-space:pre;transform:scaleX(0.92);transform-origin:0 0;">16.09.2007</div><div style="position:absolute;left:76px;top:138px;width:84px;height:16px;line-height:16px;font-size:14px;font-weight:400;color:#000;text-align:center;white-space:pre;transform:scaleX(0.92);transform-origin:50% 0;">1</div><div style="position:absolute;left:160px;top:138px;width:96px;height:16px;line-height:16px;font-size:14px;font-weight:400;color:#000;text-align:right;white-space:pre;transform:scaleX(0.92);transform-origin:100% 0;">540=00</div><div style="position:absolute;left:360px;top:138px;height:16px;line-height:16px;font-size:14px;font-weight:400;color:#000;text-align:left;white-space:pre;transform:scaleX(0.92);transform-origin:0 0;">17.09.2007</div><div style="position:absolute;left:433px;top:138px;width:84px;height:16px;line-height:16px;font-size:14px;font-weight:400;color:#000;text-align:center;white-space:pre;transform:scaleX(0.92);transform-origin:50% 0;">1</div><div style="position:absolute;left:517px;top:138px;width:96px;height:16px;line-height:16px;font-size:14px;font-weight:400;color:#000;text-align:right;white-space:pre;transform:scaleX(0.92);transform-origin:100% 0;">2 500=00</div><div style="position:absolute;left:6px;top:172px;height:16px;line-height:16px;font-size:14px;font-weight:400;color:#000;text-align:left;white-space:pre;transform:scaleX(0.92);transform-origin:0 0;">17.09.2007</div><div style="position:absolute;left:76px;top:172px;width:84px;height:16px;line-height:16px;font-size:14px;font-weight:400;color:#000;text-align:center;white-space:pre;transform:scaleX(0.92);transform-origin:50% 0;">2</div></div><div style="position:absolute;left:750px;top:142px;width:13px;height:223px;background:#FBF9F2;box-shadow:inset 1px 0 0 #EEEAE0;"></div><div style="position:absolute;left:751px;top:143px;width:11px;height:11px;box-sizing:border-box;background:#E9E3D7;border:1px solid #C9C3B3;"></div><svg style="position:absolute;left:752px;top:145px" width="9" height="7"><path d="M1 5L4.5 1.5L8 5" stroke="#000" stroke-width="1.3" fill="none"/></svg><div style="position:absolute;left:751px;top:155px;width:11px;height:49px;box-sizing:border-box;background:#E9E3D7;border:1px solid #C9C3B3;"></div><div style="position:absolute;left:23px;top:365px;width:727px;height:13px;background:#FBF9F2;box-shadow:inset 0 1px 0 #EEEAE0;"></div><div style="position:absolute;left:24px;top:366px;width:11px;height:11px;box-sizing:border-box;background:#E9E3D7;border:1px solid #C9C3B3;"></div><svg style="position:absolute;left:26px;top:367px" width="7" height="9"><path d="M5 1L1.5 4.5L5 8" stroke="#000" stroke-width="1.3" fill="none"/></svg><div style="position:absolute;left:36px;top:366px;width:300px;height:11px;box-sizing:border-box;background:#E9E3D7;border:1px solid #C9C3B3;"></div><div style="position:absolute;left:941px;top:298px;width:6px;height:491px;background:linear-gradient(90deg,rgba(0,0,0,.42),rgba(0,0,0,.12) 60%,rgba(0,0,0,0));-webkit-mask:linear-gradient(180deg,rgba(0,0,0,.3),#000 4px,#000 calc(100% - 5px),rgba(0,0,0,0));"></div><div style="position:absolute;left:68px;top:785px;width:874px;height:6px;background:linear-gradient(180deg,rgba(0,0,0,.42),rgba(0,0,0,.12) 60%,rgba(0,0,0,0));-webkit-mask:linear-gradient(90deg,rgba(0,0,0,.3),#000 4px,#000 calc(100% - 6px),rgba(0,0,0,0));"></div><div style="position:absolute;left:64px;top:294px;width:1px;height:491px;background:rgba(120,90,60,.10);"></div><div style="position:absolute;left:65px;top:294px;width:876px;height:1px;background:rgba(120,90,60,.07);"></div><div style="position:absolute;left:65px;top:295px;width:876px;height:490px;background:#1C70E8;box-shadow:inset 1px 0 0 #4A9CFF, inset -1px -1px 0 #0034C8, inset 0 1px 0 #62AEFF;"></div><div style="position:absolute;left:66px;top:296px;width:874px;height:1px;background:#3088F8;"></div><div style="position:absolute;left:68px;top:317px;width:870px;height:465px;background:#2F5CC0;"></div><div style="position:absolute;left:69px;top:318px;width:868px;height:463px;background:#FEF9EE;"></div><svg style="position:absolute;left:70px;top:299px" width="17" height="17" viewBox="0 0 17 17">
<path d="M9 2.5 L15.5 5 L11.5 16 L5 13.5 Z" fill="#E6E2D8" stroke="#B09C80" stroke-width="0.8"/>
<path d="M8 2 L13 3.5 L10 13.5 L5 12.5 Z" fill="#F6F4EE" stroke="#B09C80" stroke-width="0.6"/>
<rect x="0.5" y="0.5" width="9" height="12" fill="#FFFFFF" stroke="#D0C4AC"/>
<rect x="2" y="2" width="2" height="1" fill="#20208A"/><rect x="6" y="2" width="2" height="1" fill="#20208A"/>
<path d="M2 4.5H8M2 6.5H8M2 8.5H8M2 10.5H8M3.5 4V11M5.5 4V11" stroke="#8A8A8A" stroke-width="0.7" fill="none"/>
</svg><div style="position:absolute;left:90px;top:300px;height:16px;line-height:16px;font-size:12px;font-weight:700;color:#fff;text-align:left;white-space:pre;letter-spacing:0.1px;">Кассовая книга за период</div><div style="position:absolute;left:883px;top:311px;width:8px;height:2px;background:#fff;"></div><div style="position:absolute;left:901px;top:302px;width:11px;height:11px;box-sizing:border-box;border:1px solid #fff;border-top:2px solid #fff;"></div><svg style="position:absolute;left:923px;top:303px" width="10" height="9" viewBox="0 0 10 9">
<path d="M1 0.8L8.6 8.2M8.6 0.8L1 8.2" stroke="#fff" stroke-width="2.1" stroke-linecap="square"/></svg><div style="position:absolute;left:69px;top:318px;width:868px;height:24px;background:#EBE4D9;box-shadow:inset 1px 1px 0 #F8F4EC;"></div><div style="position:absolute;left:69px;top:342px;width:868px;height:1px;background:#8C8575;"></div><div style="position:absolute;left:74px;top:323px;height:15px;line-height:15px;font-size:12px;font-weight:400;color:#000;text-align:left;white-space:pre;transform:scaleX(0.93);transform-origin:0 0;">Действия</div><svg style="position:absolute;left:127px;top:329px" width="6" height="4"><path d="M0 0H6L3 3Z" fill="#000"/></svg><div style="position:absolute;left:139px;top:322px;width:1px;height:17px;background:#CFC9BC;"></div><svg style="position:absolute;left:149px;top:324px" width="7" height="13"><path d="M0 0L6.5 6L0 12Z" fill="#189818"/></svg><div style="position:absolute;left:163px;top:323px;height:15px;line-height:15px;font-size:12px;font-weight:700;color:#000;text-align:left;white-space:pre;transform:scaleX(0.96);transform-origin:0 0;">Сформировать</div><div style="position:absolute;left:257px;top:322px;width:1px;height:17px;background:#CFC9BC;"></div><svg style="position:absolute;left:263px;top:322px" width="17" height="16" shape-rendering="crispEdges"><rect x="1" y="1" width="7" height="9" fill="#FFFFFF"/><rect x="0" y="0" width="1" height="1" fill="#C6C6C6"/><rect x="1" y="0" width="1" height="1" fill="#C6C6C6"/><rect x="2" y="0" width="1" height="1" fill="#C6C6C6"/><rect x="3" y="0" width="1" height="1" fill="#C6C6C6"/><rect x="4" y="0" width="1" height="1" fill="#C6C6C6"/><rect x="5" y="0" width="1" height="1" fill="#C6C6C6"/><rect x="6" y="0" width="1" height="1" fill="#C6C6C6"/><rect x="7" y="0" width="1" height="1" fill="#C6C6C6"/><rect x="8" y="0" width="1" height="1" fill="#C6C6C6"/><rect x="0" y="1" width="1" height="1" fill="#C6C6C6"/><rect x="8" y="1" width="1" height="1" fill="#C6C6C6"/><rect x="9" y="1" width="1" height="1" fill="#0A0A96"/><rect x="10" y="1" width="1" height="1" fill="#0A0A96"/><rect x="0" y="2" width="1" height="1" fill="#C6C6C6"/><rect x="2" y="2" width="1" height="1" fill="#B4B4B4"/><rect x="3" y="2" width="1" height="1" fill="#B4B4B4"/><rect x="4" y="2" width="1" height="1" fill="#B4B4B4"/><rect x="5" y="2" width="1" height="1" fill="#B4B4B4"/><rect x="6" y="2" width="1" height="1" fill="#B4B4B4"/><rect x="8" y="2" width="1" height="1" fill="#C6C6C6"/><rect x="9" y="2" width="1" height="1" fill="#0A0A96"/><rect x="10" y="2" width="1" height="1" fill="#0A0A96"/><rect x="11" y="2" width="1" height="1" fill="#0A0A96"/><rect x="0" y="3" width="1" height="1" fill="#C6C6C6"/><rect x="8" y="3" width="1" height="1" fill="#C6C6C6"/><rect x="11" y="3" width="1" height="1" fill="#0A0A96"/><rect x="12" y="3" width="1" height="1" fill="#0A0A96"/><rect x="0" y="4" width="1" height="1" fill="#C6C6C6"/><rect x="2" y="4" width="1" height="1" fill="#30B8C8"/><rect x="4" y="4" width="1" height="1" fill="#A8A8A8"/><rect x="5" y="4" width="1" height="1" fill="#A8A8A8"/><rect x="6" y="4" width="1" height="1" fill="#A8A8A8"/><rect x="8" y="4" width="1" height="1" fill="#C6C6C6"/><rect x="11" y="4" width="1" height="1" fill="#0A0A96"/><rect x="12" y="4" width="1" height="1" fill="#0A0A96"/><rect x="0" y="5" width="1" height="1" fill="#C6C6C6"/><rect x="8" y="5" width="1" height="1" fill="#C6C6C6"/><rect x="11" y="5" width="1" height="1" fill="#0A0A96"/><rect x="12" y="5" width="1" height="1" fill="#0A0A96"/><rect x="0" y="6" width="1" height="1" fill="#C6C6C6"/><rect x="2" y="6" width="1" height="1" fill="#30B8C8"/><rect x="4" y="6" width="1" height="1" fill="#A8A8A8"/><rect x="5" y="6" width="1" height="1" fill="#A8A8A8"/><rect x="6" y="6" width="1" height="1" fill="#A8A8A8"/><rect x="8" y="6" width="1" height="1" fill="#C6C6C6"/><rect x="11" y="6" width="1" height="1" fill="#0A0A96"/><rect x="12" y="6" width="1" height="1" fill="#0A0A96"/><rect x="0" y="7" width="1" height="1" fill="#C6C6C6"/><rect x="8" y="7" width="1" height="1" fill="#C6C6C6"/><rect x="11" y="7" width="1" height="1" fill="#0A0A96"/><rect x="12" y="7" width="1" height="1" fill="#0A0A96"/><rect x="0" y="8" width="1" height="1" fill="#C6C6C6"/><rect x="2" y="8" width="1" height="1" fill="#30B8C8"/><rect x="4" y="8" width="1" height="1" fill="#A8A8A8"/><rect x="5" y="8" width="1" height="1" fill="#A8A8A8"/><rect x="6" y="8" width="1" height="1" fill="#A8A8A8"/><rect x="8" y="8" width="1" height="1" fill="#C6C6C6"/><rect x="9" y="8" width="1" height="1" fill="#0A0A96"/><rect x="10" y="8" width="1" height="1" fill="#0A0A96"/><rect x="11" y="8" width="1" height="1" fill="#0A0A96"/><rect x="12" y="8" width="1" height="1" fill="#0A0A96"/><rect x="13" y="8" width="1" height="1" fill="#0A0A96"/><rect x="14" y="8" width="1" height="1" fill="#0A0A96"/><rect x="0" y="9" width="1" height="1" fill="#C6C6C6"/><rect x="8" y="9" width="1" height="1" fill="#C6C6C6"/><rect x="10" y="9" width="1" height="1" fill="#0A0A96"/><rect x="11" y="9" width="1" height="1" fill="#0A0A96"/><rect x="12" y="9" width="1" height="1" fill="#0A0A96"/><rect x="13" y="9" width="1" height="1" fill="#0A0A96"/><rect x="0" y="10" width="1" height="1" fill="#C6C6C6"/><rect x="1" y="10" width="1" height="1" fill="#C6C6C6"/><rect x="2" y="10" width="1" height="1" fill="#C6C6C6"/><rect x="3" y="10" width="1" height="1" fill="#C6C6C6"/><rect x="4" y="10" width="1" height="1" fill="#C6C6C6"/><rect x="5" y="10" width="1" height="1" fill="#C6C6C6"/><rect x="6" y="10" width="1" height="1" fill="#C6C6C6"/><rect x="7" y="10" width="1" height="1" fill="#C6C6C6"/><rect x="8" y="10" width="1" height="1" fill="#C6C6C6"/><rect x="11" y="10" width="1" height="1" fill="#0A0A96"/><rect x="12" y="10" width="1" height="1" fill="#0A0A96"/><rect x="11" y="11" width="1" height="1" fill="#0A0A96"/><rect x="12" y="12" width="1" height="1" fill="#6E6C58"/><rect x="10" y="13" width="1" height="1" fill="#EEE6A8"/><rect x="11" y="13" width="1" height="1" fill="#EEE6A8"/><rect x="12" y="13" width="1" height="1" fill="#6E6C58"/><rect x="13" y="13" width="1" height="1" fill="#6E6C58"/><rect x="9" y="14" width="1" height="1" fill="#EEE6A8"/><rect x="10" y="14" width="1" height="1" fill="#EEE6A8"/><rect x="11" y="14" width="1" height="1" fill="#EEE6A8"/><rect x="12" y="14" width="1" height="1" fill="#6E6C58"/><rect x="13" y="14" width="1" height="1" fill="#6E6C58"/><rect x="14" y="14" width="1" height="1" fill="#6E6C58"/><rect x="8" y="15" width="1" height="1" fill="#EEE6A8"/><rect x="9" y="15" width="1" height="1" fill="#EEE6A8"/><rect x="10" y="15" width="1" height="1" fill="#EEE6A8"/><rect x="11" y="15" width="1" height="1" fill="#EEE6A8"/><rect x="12" y="15" width="1" height="1" fill="#6E6C58"/><rect x="13" y="15" width="1" height="1" fill="#6E6C58"/><rect x="14" y="15" width="1" height="1" fill="#6E6C58"/><rect x="15" y="15" width="1" height="1" fill="#6E6C58"/><rect x="16" y="15" width="1" height="1" fill="#6E6C58"/></svg><svg style="position:absolute;left:286px;top:322px" width="17" height="16" shape-rendering="crispEdges"><rect x="0" y="0" width="1" height="1" fill="#BCBCBC"/><rect x="1" y="0" width="1" height="1" fill="#BCBCBC"/><rect x="2" y="0" width="1" height="1" fill="#BCBCBC"/><rect x="3" y="0" width="1" height="1" fill="#BCBCBC"/><rect x="4" y="0" width="1" height="1" fill="#BCBCBC"/><rect x="5" y="0" width="1" height="1" fill="#BCBCBC"/><rect x="6" y="0" width="1" height="1" fill="#BCBCBC"/><rect x="7" y="0" width="1" height="1" fill="#BCBCBC"/><rect x="8" y="0" width="1" height="1" fill="#BCBCBC"/><rect x="0" y="1" width="1" height="1" fill="#BCBCBC"/><rect x="1" y="1" width="1" height="1" fill="#CACACA"/><rect x="2" y="1" width="1" height="1" fill="#CACACA"/><rect x="3" y="1" width="1" height="1" fill="#CACACA"/><rect x="4" y="1" width="1" height="1" fill="#CACACA"/><rect x="5" y="1" width="1" height="1" fill="#CACACA"/><rect x="6" y="1" width="1" height="1" fill="#CACACA"/><rect x="7" y="1" width="1" height="1" fill="#CACACA"/><rect x="8" y="1" width="1" height="1" fill="#BCBCBC"/><rect x="0" y="2" width="1" height="1" fill="#BCBCBC"/><rect x="1" y="2" width="1" height="1" fill="#CACACA"/><rect x="2" y="2" width="1" height="1" fill="#CACACA"/><rect x="3" y="2" width="1" height="1" fill="#CACACA"/><rect x="4" y="2" width="1" height="1" fill="#CACACA"/><rect x="5" y="2" width="1" height="1" fill="#CACACA"/><rect x="6" y="2" width="1" height="1" fill="#9A9AC0"/><rect x="7" y="2" width="1" height="1" fill="#CACACA"/><rect x="8" y="2" width="1" height="1" fill="#BCBCBC"/><rect x="0" y="3" width="1" height="1" fill="#BCBCBC"/><rect x="1" y="3" width="1" height="1" fill="#CACACA"/><rect x="2" y="3" width="1" height="1" fill="#88C8D0"/><rect x="3" y="3" width="1" height="1" fill="#CACACA"/><rect x="4" y="3" width="1" height="1" fill="#B4B4B8"/><rect x="5" y="3" width="1" height="1" fill="#9A9AC0"/><rect x="6" y="3" width="1" height="1" fill="#9A9AC0"/><rect x="7" y="3" width="1" height="1" fill="#9A9AC0"/><rect x="8" y="3" width="1" height="1" fill="#9A9AC0"/><rect x="9" y="3" width="1" height="1" fill="#9A9AC0"/><rect x="10" y="3" width="1" height="1" fill="#9A9AC0"/><rect x="0" y="4" width="1" height="1" fill="#BCBCBC"/><rect x="1" y="4" width="1" height="1" fill="#CACACA"/><rect x="2" y="4" width="1" height="1" fill="#CACACA"/><rect x="3" y="4" width="1" height="1" fill="#CACACA"/><rect x="4" y="4" width="1" height="1" fill="#CACACA"/><rect x="5" y="4" width="1" height="1" fill="#9A9AC0"/><rect x="6" y="4" width="1" height="1" fill="#9A9AC0"/><rect x="7" y="4" width="1" height="1" fill="#CACACA"/><rect x="8" y="4" width="1" height="1" fill="#BCBCBC"/><rect x="11" y="4" width="1" height="1" fill="#9A9AC0"/><rect x="0" y="5" width="1" height="1" fill="#BCBCBC"/><rect x="1" y="5" width="1" height="1" fill="#CACACA"/><rect x="2" y="5" width="1" height="1" fill="#88C8D0"/><rect x="3" y="5" width="1" height="1" fill="#CACACA"/><rect x="4" y="5" width="1" height="1" fill="#B4B4B8"/><rect x="5" y="5" width="1" height="1" fill="#B4B4B8"/><rect x="6" y="5" width="1" height="1" fill="#B4B4B8"/><rect x="7" y="5" width="1" height="1" fill="#9A9AC0"/><rect x="8" y="5" width="1" height="1" fill="#BCBCBC"/><rect x="12" y="5" width="1" height="1" fill="#9A9AC0"/><rect x="0" y="6" width="1" height="1" fill="#BCBCBC"/><rect x="1" y="6" width="1" height="1" fill="#CACACA"/><rect x="2" y="6" width="1" height="1" fill="#CACACA"/><rect x="3" y="6" width="1" height="1" fill="#CACACA"/><rect x="4" y="6" width="1" height="1" fill="#CACACA"/><rect x="5" y="6" width="1" height="1" fill="#CACACA"/><rect x="6" y="6" width="1" height="1" fill="#CACACA"/><rect x="7" y="6" width="1" height="1" fill="#CACACA"/><rect x="8" y="6" width="1" height="1" fill="#BCBCBC"/><rect x="12" y="6" width="1" height="1" fill="#9A9AC0"/><rect x="0" y="7" width="1" height="1" fill="#BCBCBC"/><rect x="1" y="7" width="1" height="1" fill="#CACACA"/><rect x="2" y="7" width="1" height="1" fill="#88C8D0"/><rect x="3" y="7" width="1" height="1" fill="#CACACA"/><rect x="4" y="7" width="1" height="1" fill="#B4B4B8"/><rect x="5" y="7" width="1" height="1" fill="#B4B4B8"/><rect x="6" y="7" width="1" height="1" fill="#B4B4B8"/><rect x="7" y="7" width="1" height="1" fill="#CACACA"/><rect x="8" y="7" width="1" height="1" fill="#BCBCBC"/><rect x="12" y="7" width="1" height="1" fill="#9A9AC0"/><rect x="0" y="8" width="1" height="1" fill="#BCBCBC"/><rect x="1" y="8" width="1" height="1" fill="#CACACA"/><rect x="2" y="8" width="1" height="1" fill="#CACACA"/><rect x="3" y="8" width="1" height="1" fill="#CACACA"/><rect x="4" y="8" width="1" height="1" fill="#CACACA"/><rect x="5" y="8" width="1" height="1" fill="#CACACA"/><rect x="6" y="8" width="1" height="1" fill="#CACACA"/><rect x="7" y="8" width="1" height="1" fill="#CACACA"/><rect x="8" y="8" width="1" height="1" fill="#BCBCBC"/><rect x="12" y="8" width="1" height="1" fill="#9A9AC0"/><rect x="0" y="9" width="1" height="1" fill="#BCBCBC"/><rect x="1" y="9" width="1" height="1" fill="#CACACA"/><rect x="2" y="9" width="1" height="1" fill="#CACACA"/><rect x="3" y="9" width="1" height="1" fill="#CACACA"/><rect x="4" y="9" width="1" height="1" fill="#CACACA"/><rect x="5" y="9" width="1" height="1" fill="#CACACA"/><rect x="6" y="9" width="1" height="1" fill="#CACACA"/><rect x="7" y="9" width="1" height="1" fill="#CACACA"/><rect x="8" y="9" width="1" height="1" fill="#BCBCBC"/><rect x="12" y="9" width="1" height="1" fill="#9A9AC0"/><rect x="0" y="10" width="1" height="1" fill="#BCBCBC"/><rect x="1" y="10" width="1" height="1" fill="#BCBCBC"/><rect x="2" y="10" width="1" height="1" fill="#BCBCBC"/><rect x="3" y="10" width="1" height="1" fill="#BCBCBC"/><rect x="4" y="10" width="1" height="1" fill="#BCBCBC"/><rect x="5" y="10" width="1" height="1" fill="#BCBCBC"/><rect x="6" y="10" width="1" height="1" fill="#BCBCBC"/><rect x="7" y="10" width="1" height="1" fill="#BCBCBC"/><rect x="8" y="10" width="1" height="1" fill="#BCBCBC"/><rect x="12" y="10" width="1" height="1" fill="#9A9AC0"/><rect x="12" y="11" width="1" height="1" fill="#9A9AC0"/><rect x="12" y="12" width="1" height="1" fill="#A8A898"/><rect x="10" y="13" width="1" height="1" fill="#E6E2B8"/><rect x="11" y="13" width="1" height="1" fill="#E6E2B8"/><rect x="12" y="13" width="1" height="1" fill="#A8A898"/><rect x="13" y="13" width="1" height="1" fill="#A8A898"/><rect x="9" y="14" width="1" height="1" fill="#E6E2B8"/><rect x="10" y="14" width="1" height="1" fill="#E6E2B8"/><rect x="11" y="14" width="1" height="1" fill="#E6E2B8"/><rect x="12" y="14" width="1" height="1" fill="#A8A898"/><rect x="13" y="14" width="1" height="1" fill="#A8A898"/><rect x="14" y="14" width="1" height="1" fill="#A8A898"/><rect x="8" y="15" width="1" height="1" fill="#E6E2B8"/><rect x="9" y="15" width="1" height="1" fill="#E6E2B8"/><rect x="10" y="15" width="1" height="1" fill="#E6E2B8"/><rect x="11" y="15" width="1" height="1" fill="#E6E2B8"/><rect x="12" y="15" width="1" height="1" fill="#A8A898"/><rect x="13" y="15" width="1" height="1" fill="#A8A898"/><rect x="14" y="15" width="1" height="1" fill="#A8A898"/><rect x="15" y="15" width="1" height="1" fill="#A8A898"/><rect x="16" y="15" width="1" height="1" fill="#A8A898"/></svg><div style="position:absolute;left:308px;top:322px;width:1px;height:17px;background:#CFC9BC;"></div><svg style="position:absolute;left:314px;top:322px" width="16" height="16" viewBox="0 0 16 16" shape-rendering="crispEdges">
<path d="M3 0H13L16 3V13L13 16H3L0 13V3Z" fill="#A8A8B0"/>
<path d="M3 1H13L15 3V13L13 15H3L1 13V3Z" fill="#FFFFD2"/><rect x="6" y="3" width="1" height="1" fill="#00008C"/><rect x="7" y="3" width="1" height="1" fill="#00008C"/><rect x="8" y="3" width="1" height="1" fill="#00008C"/><rect x="5" y="4" width="1" height="1" fill="#00008C"/><rect x="6" y="4" width="1" height="1" fill="#00008C"/><rect x="7" y="4" width="1" height="1" fill="#00008C"/><rect x="8" y="4" width="1" height="1" fill="#00008C"/><rect x="9" y="4" width="1" height="1" fill="#00008C"/><rect x="4" y="5" width="1" height="1" fill="#00008C"/><rect x="5" y="5" width="1" height="1" fill="#00008C"/><rect x="9" y="5" width="1" height="1" fill="#00008C"/><rect x="10" y="5" width="1" height="1" fill="#00008C"/><rect x="4" y="6" width="1" height="1" fill="#00008C"/><rect x="5" y="6" width="1" height="1" fill="#00008C"/><rect x="9" y="6" width="1" height="1" fill="#00008C"/><rect x="10" y="6" width="1" height="1" fill="#00008C"/><rect x="8" y="7" width="1" height="1" fill="#00008C"/><rect x="9" y="7" width="1" height="1" fill="#00008C"/><rect x="7" y="8" width="1" height="1" fill="#00008C"/><rect x="8" y="8" width="1" height="1" fill="#00008C"/><rect x="6" y="9" width="1" height="1" fill="#00008C"/><rect x="7" y="9" width="1" height="1" fill="#00008C"/><rect x="6" y="10" width="1" height="1" fill="#00008C"/><rect x="7" y="10" width="1" height="1" fill="#00008C"/><rect x="6" y="12" width="1" height="1" fill="#00008C"/><rect x="7" y="12" width="1" height="1" fill="#00008C"/><rect x="6" y="13" width="1" height="1" fill="#00008C"/><rect x="7" y="13" width="1" height="1" fill="#00008C"/></svg><div style="position:absolute;left:78px;top:354px;height:15px;line-height:15px;font-size:12px;font-weight:400;color:#000;text-align:left;white-space:pre;transform:scaleX(0.93);transform-origin:0 0;">Период с:</div><div style="position:absolute;left:135px;top:351px;width:80px;height:19px;box-sizing:border-box;background:#fff;border:1px solid #8F8B7D;"></div><div style="position:absolute;left:139px;top:354px;height:15px;line-height:15px;font-size:12px;font-weight:400;color:#000;text-align:left;white-space:pre;transform:scaleX(0.89);transform-origin:0 0;">17.09.2007</div><div style="position:absolute;left:200px;top:352px;width:14px;height:17px;background:#ECE6DA;border-left:1px solid #8F8B7D;box-sizing:border-box;"></div><svg style="position:absolute;left:203px;top:356px" width="9" height="9" shape-rendering="crispEdges"><rect x="0" y="0" width="1" height="1" fill="#000"/><rect x="1" y="0" width="1" height="1" fill="#000"/><rect x="2" y="0" width="1" height="1" fill="#000"/><rect x="3" y="0" width="1" height="1" fill="#000"/><rect x="4" y="0" width="1" height="1" fill="#000"/><rect x="5" y="0" width="1" height="1" fill="#000"/><rect x="6" y="0" width="1" height="1" fill="#000"/><rect x="7" y="0" width="1" height="1" fill="#000"/><rect x="8" y="0" width="1" height="1" fill="#000"/><rect x="0" y="1" width="1" height="1" fill="#000"/><rect x="1" y="1" width="1" height="1" fill="#F2EEE4"/><rect x="2" y="1" width="1" height="1" fill="#F2EEE4"/><rect x="3" y="1" width="1" height="1" fill="#000"/><rect x="4" y="1" width="1" height="1" fill="#000"/><rect x="5" y="1" width="1" height="1" fill="#000"/><rect x="6" y="1" width="1" height="1" fill="#F2EEE4"/><rect x="7" y="1" width="1" height="1" fill="#F2EEE4"/><rect x="8" y="1" width="1" height="1" fill="#000"/><rect x="0" y="2" width="1" height="1" fill="#000"/><rect x="1" y="2" width="1" height="1" fill="#000"/><rect x="2" y="2" width="1" height="1" fill="#000"/><rect x="3" y="2" width="1" height="1" fill="#000"/><rect x="4" y="2" width="1" height="1" fill="#000"/><rect x="5" y="2" width="1" height="1" fill="#000"/><rect x="6" y="2" width="1" height="1" fill="#000"/><rect x="7" y="2" width="1" height="1" fill="#000"/><rect x="8" y="2" width="1" height="1" fill="#000"/><rect x="0" y="3" width="1" height="1" fill="#000"/><rect x="1" y="3" width="1" height="1" fill="#F2EEE4"/><rect x="2" y="3" width="1" height="1" fill="#F2EEE4"/><rect x="3" y="3" width="1" height="1" fill="#F2EEE4"/><rect x="4" y="3" width="1" height="1" fill="#000"/><rect x="5" y="3" width="1" height="1" fill="#F2EEE4"/><rect x="6" y="3" width="1" height="1" fill="#F2EEE4"/><rect x="7" y="3" width="1" height="1" fill="#F2EEE4"/><rect x="8" y="3" width="1" height="1" fill="#000"/><rect x="0" y="4" width="1" height="1" fill="#000"/><rect x="1" y="4" width="1" height="1" fill="#000"/><rect x="2" y="4" width="1" height="1" fill="#F2EEE4"/><rect x="3" y="4" width="1" height="1" fill="#000"/><rect x="4" y="4" width="1" height="1" fill="#F2EEE4"/><rect x="5" y="4" width="1" height="1" fill="#000"/><rect x="6" y="4" width="1" height="1" fill="#F2EEE4"/><rect x="7" y="4" width="1" height="1" fill="#000"/><rect x="8" y="4" width="1" height="1" fill="#000"/><rect x="0" y="5" width="1" height="1" fill="#000"/><rect x="1" y="5" width="1" height="1" fill="#F2EEE4"/><rect x="2" y="5" width="1" height="1" fill="#F2EEE4"/><rect x="3" y="5" width="1" height="1" fill="#F2EEE4"/><rect x="4" y="5" width="1" height="1" fill="#F2EEE4"/><rect x="5" y="5" width="1" height="1" fill="#F2EEE4"/><rect x="6" y="5" width="1" height="1" fill="#F2EEE4"/><rect x="7" y="5" width="1" height="1" fill="#F2EEE4"/><rect x="8" y="5" width="1" height="1" fill="#000"/><rect x="0" y="6" width="1" height="1" fill="#000"/><rect x="1" y="6" width="1" height="1" fill="#000"/><rect x="2" y="6" width="1" height="1" fill="#F2EEE4"/><rect x="3" y="6" width="1" height="1" fill="#000"/><rect x="4" y="6" width="1" height="1" fill="#F2EEE4"/><rect x="5" y="6" width="1" height="1" fill="#000"/><rect x="6" y="6" width="1" height="1" fill="#F2EEE4"/><rect x="7" y="6" width="1" height="1" fill="#000"/><rect x="8" y="6" width="1" height="1" fill="#000"/><rect x="0" y="7" width="1" height="1" fill="#000"/><rect x="1" y="7" width="1" height="1" fill="#F2EEE4"/><rect x="2" y="7" width="1" height="1" fill="#F2EEE4"/><rect x="3" y="7" width="1" height="1" fill="#F2EEE4"/><rect x="4" y="7" width="1" height="1" fill="#F2EEE4"/><rect x="5" y="7" width="1" height="1" fill="#F2EEE4"/><rect x="6" y="7" width="1" height="1" fill="#F2EEE4"/><rect x="7" y="7" width="1" height="1" fill="#F2EEE4"/><rect x="8" y="7" width="1" height="1" fill="#000"/><rect x="0" y="8" width="1" height="1" fill="#000"/><rect x="1" y="8" width="1" height="1" fill="#000"/><rect x="2" y="8" width="1" height="1" fill="#000"/><rect x="3" y="8" width="1" height="1" fill="#000"/><rect x="4" y="8" width="1" height="1" fill="#000"/><rect x="5" y="8" width="1" height="1" fill="#000"/><rect x="6" y="8" width="1" height="1" fill="#000"/><rect x="7" y="8" width="1" height="1" fill="#000"/><rect x="8" y="8" width="1" height="1" fill="#000"/></svg><div style="position:absolute;left:218px;top:354px;height:15px;line-height:15px;font-size:12px;font-weight:400;color:#000;text-align:left;white-space:pre;transform:scaleX(0.93);transform-origin:0 0;">по:</div><div style="position:absolute;left:235px;top:351px;width:80px;height:19px;box-sizing:border-box;background:#fff;border:1px solid #8F8B7D;"></div><div style="position:absolute;left:239px;top:354px;height:15px;line-height:15px;font-size:12px;font-weight:400;color:#000;text-align:left;white-space:pre;transform:scaleX(0.89);transform-origin:0 0;">17.09.2007</div><div style="position:absolute;left:300px;top:352px;width:14px;height:17px;background:#ECE6DA;border-left:1px solid #8F8B7D;box-sizing:border-box;"></div><svg style="position:absolute;left:303px;top:356px" width="9" height="9" shape-rendering="crispEdges"><rect x="0" y="0" width="1" height="1" fill="#000"/><rect x="1" y="0" width="1" height="1" fill="#000"/><rect x="2" y="0" width="1" height="1" fill="#000"/><rect x="3" y="0" width="1" height="1" fill="#000"/><rect x="4" y="0" width="1" height="1" fill="#000"/><rect x="5" y="0" width="1" height="1" fill="#000"/><rect x="6" y="0" width="1" height="1" fill="#000"/><rect x="7" y="0" width="1" height="1" fill="#000"/><rect x="8" y="0" width="1" height="1" fill="#000"/><rect x="0" y="1" width="1" height="1" fill="#000"/><rect x="1" y="1" width="1" height="1" fill="#F2EEE4"/><rect x="2" y="1" width="1" height="1" fill="#F2EEE4"/><rect x="3" y="1" width="1" height="1" fill="#000"/><rect x="4" y="1" width="1" height="1" fill="#000"/><rect x="5" y="1" width="1" height="1" fill="#000"/><rect x="6" y="1" width="1" height="1" fill="#F2EEE4"/><rect x="7" y="1" width="1" height="1" fill="#F2EEE4"/><rect x="8" y="1" width="1" height="1" fill="#000"/><rect x="0" y="2" width="1" height="1" fill="#000"/><rect x="1" y="2" width="1" height="1" fill="#000"/><rect x="2" y="2" width="1" height="1" fill="#000"/><rect x="3" y="2" width="1" height="1" fill="#000"/><rect x="4" y="2" width="1" height="1" fill="#000"/><rect x="5" y="2" width="1" height="1" fill="#000"/><rect x="6" y="2" width="1" height="1" fill="#000"/><rect x="7" y="2" width="1" height="1" fill="#000"/><rect x="8" y="2" width="1" height="1" fill="#000"/><rect x="0" y="3" width="1" height="1" fill="#000"/><rect x="1" y="3" width="1" height="1" fill="#F2EEE4"/><rect x="2" y="3" width="1" height="1" fill="#F2EEE4"/><rect x="3" y="3" width="1" height="1" fill="#F2EEE4"/><rect x="4" y="3" width="1" height="1" fill="#000"/><rect x="5" y="3" width="1" height="1" fill="#F2EEE4"/><rect x="6" y="3" width="1" height="1" fill="#F2EEE4"/><rect x="7" y="3" width="1" height="1" fill="#F2EEE4"/><rect x="8" y="3" width="1" height="1" fill="#000"/><rect x="0" y="4" width="1" height="1" fill="#000"/><rect x="1" y="4" width="1" height="1" fill="#000"/><rect x="2" y="4" width="1" height="1" fill="#F2EEE4"/><rect x="3" y="4" width="1" height="1" fill="#000"/><rect x="4" y="4" width="1" height="1" fill="#F2EEE4"/><rect x="5" y="4" width="1" height="1" fill="#000"/><rect x="6" y="4" width="1" height="1" fill="#F2EEE4"/><rect x="7" y="4" width="1" height="1" fill="#000"/><rect x="8" y="4" width="1" height="1" fill="#000"/><rect x="0" y="5" width="1" height="1" fill="#000"/><rect x="1" y="5" width="1" height="1" fill="#F2EEE4"/><rect x="2" y="5" width="1" height="1" fill="#F2EEE4"/><rect x="3" y="5" width="1" height="1" fill="#F2EEE4"/><rect x="4" y="5" width="1" height="1" fill="#F2EEE4"/><rect x="5" y="5" width="1" height="1" fill="#F2EEE4"/><rect x="6" y="5" width="1" height="1" fill="#F2EEE4"/><rect x="7" y="5" width="1" height="1" fill="#F2EEE4"/><rect x="8" y="5" width="1" height="1" fill="#000"/><rect x="0" y="6" width="1" height="1" fill="#000"/><rect x="1" y="6" width="1" height="1" fill="#000"/><rect x="2" y="6" width="1" height="1" fill="#F2EEE4"/><rect x="3" y="6" width="1" height="1" fill="#000"/><rect x="4" y="6" width="1" height="1" fill="#F2EEE4"/><rect x="5" y="6" width="1" height="1" fill="#000"/><rect x="6" y="6" width="1" height="1" fill="#F2EEE4"/><rect x="7" y="6" width="1" height="1" fill="#000"/><rect x="8" y="6" width="1" height="1" fill="#000"/><rect x="0" y="7" width="1" height="1" fill="#000"/><rect x="1" y="7" width="1" height="1" fill="#F2EEE4"/><rect x="2" y="7" width="1" height="1" fill="#F2EEE4"/><rect x="3" y="7" width="1" height="1" fill="#F2EEE4"/><rect x="4" y="7" width="1" height="1" fill="#F2EEE4"/><rect x="5" y="7" width="1" height="1" fill="#F2EEE4"/><rect x="6" y="7" width="1" height="1" fill="#F2EEE4"/><rect x="7" y="7" width="1" height="1" fill="#F2EEE4"/><rect x="8" y="7" width="1" height="1" fill="#000"/><rect x="0" y="8" width="1" height="1" fill="#000"/><rect x="1" y="8" width="1" height="1" fill="#000"/><rect x="2" y="8" width="1" height="1" fill="#000"/><rect x="3" y="8" width="1" height="1" fill="#000"/><rect x="4" y="8" width="1" height="1" fill="#000"/><rect x="5" y="8" width="1" height="1" fill="#000"/><rect x="6" y="8" width="1" height="1" fill="#000"/><rect x="7" y="8" width="1" height="1" fill="#000"/><rect x="8" y="8" width="1" height="1" fill="#000"/></svg><div style="position:absolute;left:317px;top:351px;width:20px;height:19px;box-sizing:border-box;background:#ECE6DA;border:1px solid #8F8B7D;box-shadow:inset 1px 1px 0 #F8F6F0;"></div><div style="position:absolute;left:319px;top:353px;width:16px;height:15px;box-sizing:border-box;background-image:repeating-linear-gradient(90deg,#000 0 1px,transparent 1px 2px),repeating-linear-gradient(90deg,#000 0 1px,transparent 1px 2px),repeating-linear-gradient(180deg,#000 0 1px,transparent 1px 2px),repeating-linear-gradient(180deg,#000 0 1px,transparent 1px 2px);background-size:100% 1px,100% 1px,1px 100%,1px 100%;background-position:0 0,0 100%,0 0,100% 0;background-repeat:no-repeat;"></div><div style="position:absolute;left:323px;top:364px;width:1px;height:1px;background:#000;"></div><div style="position:absolute;left:326px;top:364px;width:1px;height:1px;background:#000;"></div><div style="position:absolute;left:329px;top:364px;width:1px;height:1px;background:#000;"></div><div style="position:absolute;left:357px;top:354px;height:15px;line-height:15px;font-size:12px;font-weight:400;color:#000;text-align:left;white-space:pre;transform:scaleX(0.93);transform-origin:0 0;">Организация:</div><div style="position:absolute;left:435px;top:351px;width:494px;height:19px;box-sizing:border-box;background:#fff;border:1px solid #8F8B7D;"></div><div style="position:absolute;left:439px;top:354px;height:15px;line-height:15px;font-size:12px;font-weight:400;color:#000;text-align:left;white-space:pre;transform:scaleX(0.93);transform-origin:0 0;">Белая акация</div><div style="position:absolute;left:900px;top:352px;width:14px;height:17px;box-sizing:border-box;background:#ECE6DA;border-left:1px solid #8F8B7D;"></div><div style="position:absolute;left:904px;top:362px;width:1px;height:2px;background:#000;"></div><div style="position:absolute;left:907px;top:362px;width:1px;height:2px;background:#000;"></div><div style="position:absolute;left:910px;top:362px;width:1px;height:2px;background:#000;"></div><div style="position:absolute;left:914px;top:352px;width:14px;height:17px;box-sizing:border-box;background:#ECE6DA;border-left:1px solid #8F8B7D;"></div><svg style="position:absolute;left:916px;top:355px" width="11" height="11" viewBox="0 0 11 11">
<circle cx="4.5" cy="4.5" r="3.2" fill="none" stroke="#000" stroke-width="1.3"/>
<path d="M6.5 6.8L9 9.3" stroke="#000" stroke-width="2"/></svg><div style="position:absolute;left:77px;top:378px;width:852px;height:1px;background:#8F8B7D;"></div><div style="position:absolute;left:83px;top:387px;width:13px;height:13px;box-sizing:border-box;background:#fff;border:1px solid #8F8B7D;"></div><div style="position:absolute;left:99px;top:387px;height:15px;line-height:15px;font-size:12px;font-weight:400;color:#000;text-align:left;white-space:pre;transform:scaleX(0.93);transform-origin:0 0;">Пересчитать номера листов и остатки с начала года</div><div style="position:absolute;left:427px;top:387px;width:13px;height:13px;box-sizing:border-box;background:#fff;border:1px solid #8F8B7D;"></div><div style="position:absolute;left:443px;top:387px;height:15px;line-height:15px;font-size:12px;font-weight:400;color:#000;text-align:left;white-space:pre;transform:scaleX(0.93);transform-origin:0 0;">Выводить основания кассовых ордеров</div><div style="position:absolute;left:78px;top:409px;height:15px;line-height:15px;font-size:12px;font-weight:700;color:#857D6D;text-align:left;white-space:pre;transform:scaleX(1.0);transform-origin:0 0;">Последний лист</div><div style="position:absolute;left:77px;top:423px;width:852px;height:1px;background:#8F8B7D;"></div><svg style="position:absolute;left:81px;top:431px" width="12" height="12" viewBox="0 0 12 12">
<circle cx="6" cy="6" r="5.4" fill="#fff" stroke="#A8A498"/>
<circle cx="6" cy="6" r="1.9" fill="#000"/></svg><div style="position:absolute;left:97px;top:432px;height:15px;line-height:15px;font-size:12px;font-weight:400;color:#000;text-align:left;white-space:pre;transform:scaleX(0.93);transform-origin:0 0;">Обычный</div><svg style="position:absolute;left:173px;top:431px" width="12" height="12" viewBox="0 0 12 12">
<circle cx="6" cy="6" r="5.4" fill="#fff" stroke="#D2CEC4"/>
</svg><div style="position:absolute;left:189px;top:432px;height:15px;line-height:15px;font-size:12px;font-weight:400;color:#A5A39C;text-align:left;white-space:pre;transform:scaleX(0.93);transform-origin:0 0;">Последний в месяце</div><svg style="position:absolute;left:321px;top:431px" width="12" height="12" viewBox="0 0 12 12">
<circle cx="6" cy="6" r="5.4" fill="#fff" stroke="#D2CEC4"/>
</svg><div style="position:absolute;left:337px;top:432px;height:15px;line-height:15px;font-size:12px;font-weight:400;color:#A5A39C;text-align:left;white-space:pre;transform:scaleX(0.93);transform-origin:0 0;">Последний в году</div><div style="position:absolute;left:77px;top:453px;width:852px;height:320px;box-sizing:border-box;border:1px solid #8F8B7D;background:#fff;"></div><div style="position:absolute;left:78px;top:454px;width:836px;height:305px;overflow:hidden;"><div style="position:absolute;left:-1px;top:14px;width:679px;height:20px;line-height:20px;font-size:16px;font-weight:400;color:#000;text-align:center;white-space:pre;-webkit-text-stroke:0.35px #000;">КАССА за 17.09.2007</div><div style="position:absolute;left:-1px;top:35px;width:679px;height:16px;line-height:16px;font-size:13px;font-weight:700;color:#000;text-align:center;white-space:pre;">Вкладной лист кассовой книги</div><div style="position:absolute;left:635px;top:53px;height:14px;line-height:14px;font-size:11.5px;font-weight:400;color:#000;text-align:left;white-space:pre;transform:scaleX(0.95);transform-origin:0 0;">Лист 28</div><div style="position:absolute;left:-1px;top:67px;width:679px;height:1px;background:repeating-linear-gradient(90deg,#000 0 1px,transparent 1px 2px);"></div><div style="position:absolute;left:-1px;top:119px;width:679px;height:1px;background:repeating-linear-gradient(90deg,#000 0 1px,transparent 1px 2px);"></div><div style="position:absolute;left:-1px;top:136px;width:679px;height:1px;background:repeating-linear-gradient(90deg,#000 0 1px,transparent 1px 2px);"></div><div style="position:absolute;left:-1px;top:153px;width:679px;height:1px;background:repeating-linear-gradient(90deg,#000 0 1px,transparent 1px 2px);"></div><div style="position:absolute;left:-1px;top:188px;width:679px;height:1px;background:repeating-linear-gradient(90deg,#000 0 1px,transparent 1px 2px);"></div><div style="position:absolute;left:-1px;top:223px;width:679px;height:1px;background:repeating-linear-gradient(90deg,#000 0 1px,transparent 1px 2px);"></div><div style="position:absolute;left:-1px;top:240px;width:679px;height:1px;background:repeating-linear-gradient(90deg,#000 0 1px,transparent 1px 2px);"></div><div style="position:absolute;left:-1px;top:292px;width:679px;height:1px;background:repeating-linear-gradient(90deg,#000 0 1px,transparent 1px 2px);"></div><div style="position:absolute;left:-1px;top:257px;width:368px;height:1px;background:repeating-linear-gradient(90deg,#000 0 1px,transparent 1px 2px);"></div><div style="position:absolute;left:468px;top:257px;width:210px;height:1px;background:repeating-linear-gradient(90deg,#000 0 1px,transparent 1px 2px);"></div><div style="position:absolute;left:69px;top:67px;width:1px;height:69px;background:repeating-linear-gradient(180deg,#000 0 1px,transparent 1px 2px);"></div><div style="position:absolute;left:69px;top:153px;width:1px;height:70px;background:repeating-linear-gradient(180deg,#000 0 1px,transparent 1px 2px);"></div><div style="position:absolute;left:367px;top:67px;width:1px;height:225px;background:repeating-linear-gradient(180deg,#000 0 1px,transparent 1px 2px);"></div><div style="position:absolute;left:468px;top:67px;width:1px;height:225px;background:repeating-linear-gradient(180deg,#000 0 1px,transparent 1px 2px);"></div><div style="position:absolute;left:573px;top:67px;width:1px;height:225px;background:repeating-linear-gradient(180deg,#000 0 1px,transparent 1px 2px);"></div><div style="position:absolute;left:678px;top:67px;width:1px;height:225px;background:repeating-linear-gradient(180deg,#000 0 1px,transparent 1px 2px);"></div><div style="position:absolute;left:-2px;top:79px;width:70px;height:15px;line-height:15px;font-size:12px;font-weight:700;color:#000;text-align:center;white-space:pre;transform:scaleX(0.97);transform-origin:50% 0;">Номер</div><div style="position:absolute;left:-2px;top:94px;width:70px;height:15px;line-height:15px;font-size:12px;font-weight:700;color:#000;text-align:center;white-space:pre;transform:scaleX(0.97);transform-origin:50% 0;">документа</div><div style="position:absolute;left:69px;top:87px;width:298px;height:15px;line-height:15px;font-size:12px;font-weight:700;color:#000;text-align:center;white-space:pre;transform:scaleX(0.97);transform-origin:50% 0;">От кого получено или кому выдано</div><div style="position:absolute;left:367px;top:72px;width:101px;height:15px;line-height:15px;font-size:12px;font-weight:700;color:#000;text-align:center;white-space:pre;transform:scaleX(0.97);transform-origin:50% 0;">Номер коррес-</div><div style="position:absolute;left:367px;top:87px;width:101px;height:15px;line-height:15px;font-size:12px;font-weight:700;color:#000;text-align:center;white-space:pre;transform:scaleX(0.97);transform-origin:50% 0;">пондирующего</div><div style="position:absolute;left:367px;top:102px;width:101px;height:15px;line-height:15px;font-size:12px;font-weight:700;color:#000;text-align:center;white-space:pre;transform:scaleX(0.97);transform-origin:50% 0;">счета, субсчета</div><div style="position:absolute;left:468px;top:69px;width:105px;height:15px;line-height:15px;font-size:12px;font-weight:700;color:#000;text-align:center;white-space:pre;transform:scaleX(0.97);transform-origin:50% 0;">Приход,</div><div style="position:absolute;left:468px;top:84px;width:105px;height:15px;line-height:15px;font-size:12px;font-weight:700;color:#000;text-align:center;white-space:pre;transform:scaleX(0.97);transform-origin:50% 0;">руб. коп.</div><div style="position:absolute;left:573px;top:69px;width:105px;height:15px;line-height:15px;font-size:12px;font-weight:700;color:#000;text-align:center;white-space:pre;transform:scaleX(0.97);transform-origin:50% 0;">Расход,</div><div style="position:absolute;left:573px;top:84px;width:105px;height:15px;line-height:15px;font-size:12px;font-weight:700;color:#000;text-align:center;white-space:pre;transform:scaleX(0.97);transform-origin:50% 0;">руб. коп.</div><div style="position:absolute;left:-1px;top:122px;width:70px;height:14px;line-height:14px;font-size:11.5px;font-weight:400;color:#000;text-align:center;white-space:pre;">1</div><div style="position:absolute;left:69px;top:122px;width:298px;height:14px;line-height:14px;font-size:11.5px;font-weight:400;color:#000;text-align:center;white-space:pre;">2</div><div style="position:absolute;left:367px;top:122px;width:101px;height:14px;line-height:14px;font-size:11.5px;font-weight:400;color:#000;text-align:center;white-space:pre;">3</div><div style="position:absolute;left:468px;top:122px;width:105px;height:14px;line-height:14px;font-size:11.5px;font-weight:400;color:#000;text-align:center;white-space:pre;">4</div><div style="position:absolute;left:573px;top:122px;width:105px;height:14px;line-height:14px;font-size:11.5px;font-weight:400;color:#000;text-align:center;white-space:pre;">5</div><div style="position:absolute;left:-1px;top:137px;width:367px;height:15px;line-height:15px;font-size:13.3px;font-weight:700;color:#000;text-align:right;white-space:pre;transform:scaleX(0.88);transform-origin:100% 0;letter-spacing:1.07px;">Остаток на начало дня</div><div style="position:absolute;left:468px;top:138px;width:101px;height:15px;line-height:15px;font-size:14px;font-weight:700;color:#000;text-align:right;white-space:pre;transform:scaleX(0.9);transform-origin:100% 0;">3 240=00</div><div style="position:absolute;left:573px;top:137px;width:105px;height:16px;line-height:16px;font-size:14px;font-weight:400;color:#000;text-align:center;white-space:pre;transform:scaleX(0.92);transform-origin:50% 0;">X</div><div style="position:absolute;left:0px;top:154px;width:68px;height:16px;line-height:16px;font-size:14px;font-weight:400;color:#000;text-align:center;white-space:pre;transform:scaleX(0.92);transform-origin:50% 0;">2</div><div style="position:absolute;left:73px;top:154px;height:16px;line-height:16px;font-size:14px;font-weight:400;color:#000;text-align:left;white-space:pre;transform:scaleX(0.905);transform-origin:0 0;">Принято от ООО "База "Электротовары"</div><div style="position:absolute;left:367px;top:154px;width:101px;height:16px;line-height:16px;font-size:14px;font-weight:400;color:#000;text-align:center;white-space:pre;transform:scaleX(0.92);transform-origin:50% 0;">62</div><div style="position:absolute;left:468px;top:154px;width:101px;height:16px;line-height:16px;font-size:14px;font-weight:400;color:#000;text-align:right;white-space:pre;transform:scaleX(0.92);transform-origin:100% 0;">590=00</div><div style="position:absolute;left:0px;top:189px;width:68px;height:16px;line-height:16px;font-size:14px;font-weight:400;color:#000;text-align:center;white-space:pre;transform:scaleX(0.92);transform-origin:50% 0;">1</div><div style="position:absolute;left:73px;top:189px;height:16px;line-height:16px;font-size:14px;font-weight:400;color:#000;text-align:left;white-space:pre;transform:scaleX(0.92);transform-origin:0 0;">Выдано Сидоров И.С.</div><div style="position:absolute;left:367px;top:189px;width:101px;height:16px;line-height:16px;font-size:14px;font-weight:400;color:#000;text-align:center;white-space:pre;transform:scaleX(0.92);transform-origin:50% 0;">71</div><div style="position:absolute;left:573px;top:189px;width:100px;height:16px;line-height:16px;font-size:14px;font-weight:400;color:#000;text-align:right;white-space:pre;transform:scaleX(0.92);transform-origin:100% 0;">2 500=00</div><div style="position:absolute;left:-1px;top:224px;width:367px;height:15px;line-height:15px;font-size:13.3px;font-weight:700;color:#000;text-align:right;white-space:pre;transform:scaleX(0.88);transform-origin:100% 0;letter-spacing:1.07px;">Итого за день</div><div style="position:absolute;left:468px;top:225px;width:101px;height:15px;line-height:15px;font-size:14px;font-weight:700;color:#000;text-align:right;white-space:pre;transform:scaleX(0.9);transform-origin:100% 0;">590=00</div><div style="position:absolute;left:573px;top:225px;width:100px;height:15px;line-height:15px;font-size:14px;font-weight:700;color:#000;text-align:right;white-space:pre;transform:scaleX(0.9);transform-origin:100% 0;">2 500=00</div><div style="position:absolute;left:-1px;top:241px;width:367px;height:15px;line-height:15px;font-size:13.3px;font-weight:700;color:#000;text-align:right;white-space:pre;transform:scaleX(0.88);transform-origin:100% 0;letter-spacing:1.07px;">Остаток на конец  дня</div><div style="position:absolute;left:468px;top:242px;width:101px;height:15px;line-height:15px;font-size:14px;font-weight:700;color:#000;text-align:right;white-space:pre;transform:scaleX(0.9);transform-origin:100% 0;">1 330=00</div><div style="position:absolute;left:573px;top:241px;width:105px;height:16px;line-height:16px;font-size:14px;font-weight:400;color:#000;text-align:center;white-space:pre;transform:scaleX(0.92);transform-origin:50% 0;">X</div><div style="position:absolute;left:-1px;top:258px;width:367px;height:15px;line-height:15px;font-size:13.3px;font-weight:700;color:#000;text-align:right;white-space:pre;transform:scaleX(0.88);transform-origin:100% 0;letter-spacing:1.07px;">в том числе на заработную плату, выплаты</div><div style="position:absolute;left:-1px;top:274px;width:367px;height:15px;line-height:15px;font-size:13.3px;font-weight:700;color:#000;text-align:right;white-space:pre;transform:scaleX(0.88);transform-origin:100% 0;letter-spacing:1.07px;">социального характера и стипендии</div><div style="position:absolute;left:573px;top:276px;width:105px;height:16px;line-height:16px;font-size:14px;font-weight:400;color:#000;text-align:center;white-space:pre;transform:scaleX(0.92);transform-origin:50% 0;">X</div><div style="position:absolute;left:678px;top:67px;width:679px;height:1px;background:repeating-linear-gradient(90deg,#000 0 1px,transparent 1px 2px);"></div><div style="position:absolute;left:678px;top:119px;width:679px;height:1px;background:repeating-linear-gradient(90deg,#000 0 1px,transparent 1px 2px);"></div><div style="position:absolute;left:678px;top:136px;width:679px;height:1px;background:repeating-linear-gradient(90deg,#000 0 1px,transparent 1px 2px);"></div><div style="position:absolute;left:678px;top:153px;width:679px;height:1px;background:repeating-linear-gradient(90deg,#000 0 1px,transparent 1px 2px);"></div><div style="position:absolute;left:678px;top:188px;width:679px;height:1px;background:repeating-linear-gradient(90deg,#000 0 1px,transparent 1px 2px);"></div><div style="position:absolute;left:678px;top:223px;width:679px;height:1px;background:repeating-linear-gradient(90deg,#000 0 1px,transparent 1px 2px);"></div><div style="position:absolute;left:678px;top:240px;width:679px;height:1px;background:repeating-linear-gradient(90deg,#000 0 1px,transparent 1px 2px);"></div><div style="position:absolute;left:678px;top:292px;width:679px;height:1px;background:repeating-linear-gradient(90deg,#000 0 1px,transparent 1px 2px);"></div><div style="position:absolute;left:678px;top:257px;width:368px;height:1px;background:repeating-linear-gradient(90deg,#000 0 1px,transparent 1px 2px);"></div><div style="position:absolute;left:1147px;top:257px;width:210px;height:1px;background:repeating-linear-gradient(90deg,#000 0 1px,transparent 1px 2px);"></div><div style="position:absolute;left:748px;top:67px;width:1px;height:69px;background:repeating-linear-gradient(180deg,#000 0 1px,transparent 1px 2px);"></div><div style="position:absolute;left:748px;top:153px;width:1px;height:70px;background:repeating-linear-gradient(180deg,#000 0 1px,transparent 1px 2px);"></div><div style="position:absolute;left:1046px;top:67px;width:1px;height:225px;background:repeating-linear-gradient(180deg,#000 0 1px,transparent 1px 2px);"></div><div style="position:absolute;left:1147px;top:67px;width:1px;height:225px;background:repeating-linear-gradient(180deg,#000 0 1px,transparent 1px 2px);"></div><div style="position:absolute;left:1252px;top:67px;width:1px;height:225px;background:repeating-linear-gradient(180deg,#000 0 1px,transparent 1px 2px);"></div><div style="position:absolute;left:1357px;top:67px;width:1px;height:225px;background:repeating-linear-gradient(180deg,#000 0 1px,transparent 1px 2px);"></div><div style="position:absolute;left:677px;top:79px;width:70px;height:15px;line-height:15px;font-size:12px;font-weight:700;color:#000;text-align:center;white-space:pre;transform:scaleX(0.97);transform-origin:50% 0;">Номер</div><div style="position:absolute;left:677px;top:94px;width:70px;height:15px;line-height:15px;font-size:12px;font-weight:700;color:#000;text-align:center;white-space:pre;transform:scaleX(0.97);transform-origin:50% 0;">документа</div><div style="position:absolute;left:748px;top:87px;width:298px;height:15px;line-height:15px;font-size:12px;font-weight:700;color:#000;text-align:center;white-space:pre;transform:scaleX(0.97);transform-origin:50% 0;">От кого получено или кому выдано</div><div style="position:absolute;left:1046px;top:72px;width:101px;height:15px;line-height:15px;font-size:12px;font-weight:700;color:#000;text-align:center;white-space:pre;transform:scaleX(0.97);transform-origin:50% 0;">Номер коррес-</div><div style="position:absolute;left:1046px;top:87px;width:101px;height:15px;line-height:15px;font-size:12px;font-weight:700;color:#000;text-align:center;white-space:pre;transform:scaleX(0.97);transform-origin:50% 0;">пондирующего</div><div style="position:absolute;left:1046px;top:102px;width:101px;height:15px;line-height:15px;font-size:12px;font-weight:700;color:#000;text-align:center;white-space:pre;transform:scaleX(0.97);transform-origin:50% 0;">счета, субсчета</div><div style="position:absolute;left:1147px;top:69px;width:105px;height:15px;line-height:15px;font-size:12px;font-weight:700;color:#000;text-align:center;white-space:pre;transform:scaleX(0.97);transform-origin:50% 0;">Приход,</div><div style="position:absolute;left:1147px;top:84px;width:105px;height:15px;line-height:15px;font-size:12px;font-weight:700;color:#000;text-align:center;white-space:pre;transform:scaleX(0.97);transform-origin:50% 0;">руб. коп.</div><div style="position:absolute;left:1252px;top:69px;width:105px;height:15px;line-height:15px;font-size:12px;font-weight:700;color:#000;text-align:center;white-space:pre;transform:scaleX(0.97);transform-origin:50% 0;">Расход,</div><div style="position:absolute;left:1252px;top:84px;width:105px;height:15px;line-height:15px;font-size:12px;font-weight:700;color:#000;text-align:center;white-space:pre;transform:scaleX(0.97);transform-origin:50% 0;">руб. коп.</div><div style="position:absolute;left:678px;top:122px;width:70px;height:14px;line-height:14px;font-size:11.5px;font-weight:400;color:#000;text-align:center;white-space:pre;">1</div><div style="position:absolute;left:748px;top:122px;width:298px;height:14px;line-height:14px;font-size:11.5px;font-weight:400;color:#000;text-align:center;white-space:pre;">2</div><div style="position:absolute;left:1046px;top:122px;width:101px;height:14px;line-height:14px;font-size:11.5px;font-weight:400;color:#000;text-align:center;white-space:pre;">3</div><div style="position:absolute;left:1147px;top:122px;width:105px;height:14px;line-height:14px;font-size:11.5px;font-weight:400;color:#000;text-align:center;white-space:pre;">4</div><div style="position:absolute;left:1252px;top:122px;width:105px;height:14px;line-height:14px;font-size:11.5px;font-weight:400;color:#000;text-align:center;white-space:pre;">5</div><div style="position:absolute;left:678px;top:137px;width:367px;height:15px;line-height:15px;font-size:13.3px;font-weight:700;color:#000;text-align:right;white-space:pre;transform:scaleX(0.88);transform-origin:100% 0;letter-spacing:1.07px;">Остаток на начало дня</div><div style="position:absolute;left:1147px;top:138px;width:101px;height:15px;line-height:15px;font-size:14px;font-weight:700;color:#000;text-align:right;white-space:pre;transform:scaleX(0.9);transform-origin:100% 0;">3 240=00</div><div style="position:absolute;left:1252px;top:137px;width:105px;height:16px;line-height:16px;font-size:14px;font-weight:400;color:#000;text-align:center;white-space:pre;transform:scaleX(0.92);transform-origin:50% 0;">X</div><div style="position:absolute;left:679px;top:154px;width:68px;height:16px;line-height:16px;font-size:14px;font-weight:400;color:#000;text-align:center;white-space:pre;transform:scaleX(0.92);transform-origin:50% 0;">2</div><div style="position:absolute;left:752px;top:154px;height:16px;line-height:16px;font-size:14px;font-weight:400;color:#000;text-align:left;white-space:pre;transform:scaleX(0.905);transform-origin:0 0;">Принято от ООО "База "Электротовары"</div><div style="position:absolute;left:1046px;top:154px;width:101px;height:16px;line-height:16px;font-size:14px;font-weight:400;color:#000;text-align:center;white-space:pre;transform:scaleX(0.92);transform-origin:50% 0;">62</div><div style="position:absolute;left:1147px;top:154px;width:101px;height:16px;line-height:16px;font-size:14px;font-weight:400;color:#000;text-align:right;white-space:pre;transform:scaleX(0.92);transform-origin:100% 0;">590=00</div><div style="position:absolute;left:679px;top:189px;width:68px;height:16px;line-height:16px;font-size:14px;font-weight:400;color:#000;text-align:center;white-space:pre;transform:scaleX(0.92);transform-origin:50% 0;">1</div><div style="position:absolute;left:752px;top:189px;height:16px;line-height:16px;font-size:14px;font-weight:400;color:#000;text-align:left;white-space:pre;transform:scaleX(0.92);transform-origin:0 0;">Выдано Сидоров И.С.</div><div style="position:absolute;left:1046px;top:189px;width:101px;height:16px;line-height:16px;font-size:14px;font-weight:400;color:#000;text-align:center;white-space:pre;transform:scaleX(0.92);transform-origin:50% 0;">71</div><div style="position:absolute;left:1252px;top:189px;width:100px;height:16px;line-height:16px;font-size:14px;font-weight:400;color:#000;text-align:right;white-space:pre;transform:scaleX(0.92);transform-origin:100% 0;">2 500=00</div><div style="position:absolute;left:678px;top:224px;width:367px;height:15px;line-height:15px;font-size:13.3px;font-weight:700;color:#000;text-align:right;white-space:pre;transform:scaleX(0.88);transform-origin:100% 0;letter-spacing:1.07px;">Итого за день</div><div style="position:absolute;left:1147px;top:225px;width:101px;height:15px;line-height:15px;font-size:14px;font-weight:700;color:#000;text-align:right;white-space:pre;transform:scaleX(0.9);transform-origin:100% 0;">590=00</div><div style="position:absolute;left:1252px;top:225px;width:100px;height:15px;line-height:15px;font-size:14px;font-weight:700;color:#000;text-align:right;white-space:pre;transform:scaleX(0.9);transform-origin:100% 0;">2 500=00</div><div style="position:absolute;left:678px;top:241px;width:367px;height:15px;line-height:15px;font-size:13.3px;font-weight:700;color:#000;text-align:right;white-space:pre;transform:scaleX(0.88);transform-origin:100% 0;letter-spacing:1.07px;">Остаток на конец  дня</div><div style="position:absolute;left:1147px;top:242px;width:101px;height:15px;line-height:15px;font-size:14px;font-weight:700;color:#000;text-align:right;white-space:pre;transform:scaleX(0.9);transform-origin:100% 0;">1 330=00</div><div style="position:absolute;left:1252px;top:241px;width:105px;height:16px;line-height:16px;font-size:14px;font-weight:400;color:#000;text-align:center;white-space:pre;transform:scaleX(0.92);transform-origin:50% 0;">X</div><div style="position:absolute;left:678px;top:258px;width:367px;height:15px;line-height:15px;font-size:13.3px;font-weight:700;color:#000;text-align:right;white-space:pre;transform:scaleX(0.88);transform-origin:100% 0;letter-spacing:1.07px;">в том числе на заработную плату, выплаты</div><div style="position:absolute;left:678px;top:274px;width:367px;height:15px;line-height:15px;font-size:13.3px;font-weight:700;color:#000;text-align:right;white-space:pre;transform:scaleX(0.88);transform-origin:100% 0;letter-spacing:1.07px;">социального характера и стипендии</div><div style="position:absolute;left:1252px;top:276px;width:105px;height:16px;line-height:16px;font-size:14px;font-weight:400;color:#000;text-align:center;white-space:pre;transform:scaleX(0.92);transform-origin:50% 0;">X</div></div><div style="position:absolute;left:915px;top:454px;width:13px;height:305px;background:#FBF9F2;box-shadow:inset 1px 0 0 #EEEAE0;"></div><div style="position:absolute;left:916px;top:455px;width:11px;height:11px;box-sizing:border-box;background:#E9E3D7;border:1px solid #C9C3B3;"></div><svg style="position:absolute;left:917px;top:457px" width="9" height="7"><path d="M1 5L4.5 1.5L8 5" stroke="#000" stroke-width="1.3" fill="none"/></svg><div style="position:absolute;left:916px;top:467px;width:11px;height:188px;box-sizing:border-box;background:#E9E3D7;border:1px solid #C9C3B3;"></div><div style="position:absolute;left:916px;top:747px;width:11px;height:11px;box-sizing:border-box;background:#E9E3D7;border:1px solid #C9C3B3;"></div><svg style="position:absolute;left:917px;top:749px" width="9" height="7"><path d="M1 1.5L4.5 5L8 1.5" stroke="#000" stroke-width="1.3" fill="none"/></svg><div style="position:absolute;left:78px;top:759px;width:837px;height:13px;background:#FBF9F2;box-shadow:inset 0 1px 0 #EEEAE0;"></div><div style="position:absolute;left:79px;top:760px;width:11px;height:11px;box-sizing:border-box;background:#E9E3D7;border:1px solid #C9C3B3;"></div><svg style="position:absolute;left:81px;top:761px" width="7" height="9"><path d="M5 1L1.5 4.5L5 8" stroke="#000" stroke-width="1.3" fill="none"/></svg><div style="position:absolute;left:91px;top:760px;width:497px;height:11px;box-sizing:border-box;background:#E9E3D7;border:1px solid #C9C3B3;"></div><div style="position:absolute;left:903px;top:760px;width:11px;height:11px;box-sizing:border-box;background:#E9E3D7;border:1px solid #C9C3B3;"></div><svg style="position:absolute;left:906px;top:761px" width="7" height="9"><path d="M1.5 1L5 4.5L1.5 8" stroke="#000" stroke-width="1.3" fill="none"/></svg><div style="position:absolute;left:915px;top:759px;width:13px;height:13px;background:#D4CFC2;"></div>
</div></body></html>
